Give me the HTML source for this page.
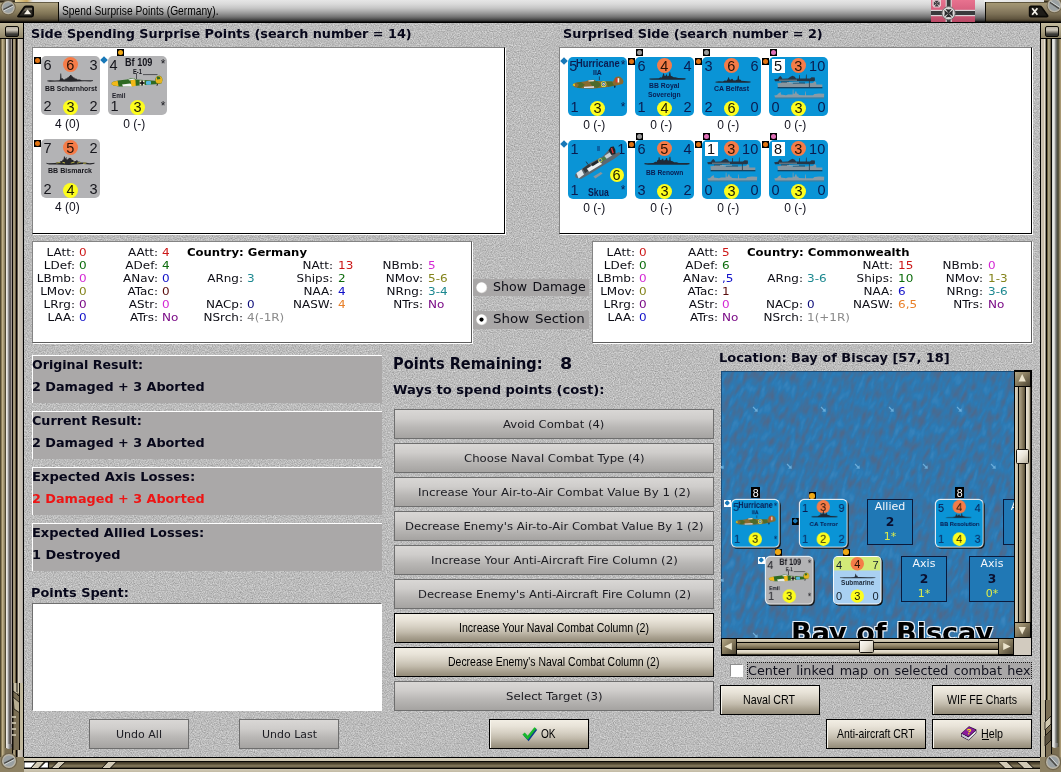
<!DOCTYPE html><html><head><meta charset="utf-8"><title>Spend Surprise Points (Germany).</title>
<style>
html,body{margin:0;padding:0;}
body{width:1061px;height:772px;overflow:hidden;position:relative;background:#bababa;font-family:"DejaVu Sans","Verdana",sans-serif;}
.t{position:absolute;white-space:pre;display:block;}
.abs{position:absolute;}
.sunk{position:absolute;background:#fff;border-top:1px solid #848484;border-left:1px solid #848484;border-right:1px solid #000;border-bottom:1px solid #000;box-sizing:border-box;box-shadow:1px 1px 0 #fff;}
.res{position:absolute;background:#aaa8a8;border-top:1px solid #fff;border-left:1px solid #fff;box-sizing:border-box;}
.bd{position:absolute;box-sizing:border-box;border:1px solid #6e6e6e;background:linear-gradient(#d9d7d5 0%,#cfcdcb 30%,#bab8b6 60%,#a5a3a1 100%);}
.ba{position:absolute;box-sizing:border-box;border:1px solid #000;background:linear-gradient(#f2eee4 0%,#e8e3d8 22%,#d6d0c3 45%,#c2bbac 65%,#aaa291 82%,#938b79 100%);box-shadow:inset 1px 0 0 #f8f6ee;}
.cn{position:absolute;width:59px;height:59px;border-radius:5px;}
.cn .t{font-family:"Liberation Sans","Arial",sans-serif;}
.mk{position:absolute;width:7px;height:7px;}
.mk i{position:absolute;left:0.7px;top:0.7px;width:5.6px;height:5.6px;border-radius:50%;display:block;}
#root{position:absolute;left:0;top:0;width:1061px;height:772px;overflow:hidden;will-change:transform;}
</style></head><body><div id="root">
<svg class="abs" style="left:24px;top:22px" width="1016" height="735"><defs>
<filter id="nz" x="0" y="0" width="100%" height="100%" color-interpolation-filters="sRGB"><feTurbulence type="fractalNoise" baseFrequency="0.85" numOctaves="2" seed="7" result="n"/>
<feColorMatrix type="matrix" values="0.37 0 0 0 0.55  0.37 0 0 0 0.55  0.37 0 0 0 0.55  0 0 0 0 1"/></filter></defs>
<rect width="1016" height="735" filter="url(#nz)"/></svg>
<div class="abs" style="left:0;top:0;width:1061px;height:23px;background:linear-gradient(#e6e6e6 0px,#dadada 4px,#c6c6c6 8px,#aeaeae 11px,#929292 14px,#727272 17px,#545454 19px,#2e2e2e 21px,#000 22px,#000 23px)"></div><div class="abs" style="left:0;top:0;width:59px;height:23px;background:linear-gradient(#6a5f48 0px,#1a1408 2px,#b0a482 3px,#9a8d6b 8px,#7f7355 14px,#5f553f 19px,#332c1e 21px,#000 22px);border-right:1px solid #0c0a04;box-sizing:border-box"></div><div class="abs" style="left:15px;top:0;width:44px;height:2px;background:linear-gradient(90deg,#e8d9a8,#caa860 12px,#e6e6e6 18px,#f2f2f2)"></div><svg class="abs" style="left:0;top:0" width="18" height="18"><circle cx="8.2" cy="7.6" r="7.6" fill="#6f644c"/><circle cx="8.2" cy="7.6" r="6.6" fill="#b9b4a6"/><circle cx="8.2" cy="7.6" r="5.3" fill="#9aa0a2"/><path d="M3.4 9.6 L12.6 5" stroke="#4a4a48" stroke-width="1.6"/><path d="M3.8 10.8 L13 6.2" stroke="#d8dcdc" stroke-width="0.9"/></svg><svg class="abs" style="left:16px;top:5px" width="20" height="14"><path d="M2 11.2 L8.2 2.2 Q9 1.2 10.4 1.2 L15.6 1.2 Q17.2 1.2 17.2 2.8 L17.2 10 Q17.2 11.6 15.6 11.6 L3 11.6 Q1.4 11.6 2 11.2Z" fill="#2b2822" stroke="#0a0906" stroke-width="1.6"/><path d="M5.4 8.4 L9.4 3 L16 3 L16 5 L8 6Z" fill="#8d8674" opacity=".75"/><path d="M8 9.2 L11.6 4.6 L15.2 9.2Z" fill="#f6f2e6"/></svg><span class="t" style="left:62.30px;top:5.10px;font:normal 12.4px/12.4px 'Liberation Sans','Arial',sans-serif;color:#000;transform:scaleX(0.8263);transform-origin:0 0;">Spend Surprise Points (Germany).</span><svg class="abs" style="left:931px;top:0" width="44" height="22" viewBox="0 0 44 22">
<defs><linearGradient id="fg" x1="0" y1="0" x2="0" y2="1"><stop offset="0" stop-color="#e8728f"/><stop offset=".5" stop-color="#d65f7e"/><stop offset="1" stop-color="#b84864"/></linearGradient></defs>
<rect width="44" height="22" fill="url(#fg)"/>
<rect x="0" y="9.8" width="44" height="6.4" fill="#d9d3d5"/><rect x="14.6" y="0" width="6.2" height="22" fill="#d9d3d5"/>
<rect x="0" y="11" width="44" height="4" fill="#3a3a3c"/><rect x="15.8" y="0" width="3.8" height="22" fill="#3a3a3c"/>
<circle cx="17.6" cy="13.2" r="6.6" fill="#dedada" stroke="#6a6668" stroke-width="0.9"/>
<path d="M17.6 13.2 L14.4 8.8 Q17.6 10 20.8 8.8Z M17.6 13.2 L14.4 17.6 Q17.6 16.4 20.8 17.6Z M17.6 13.2 L13.2 10 Q14.4 13.2 13.2 16.4Z M17.6 13.2 L22 10 Q20.8 13.2 22 16.4Z" fill="#2a2a2c"/>
<path d="M1.4 0 H10 V5.6 L8.6 7.4 H2.8 L1.4 5.6Z" fill="#e6ced4"/>
<path d="M5.7 3.6 L3.6 0.8 H7.8Z M5.7 3.6 L3.6 6.4 H7.8Z M5.7 3.6 L2.8 1.6 V5.6Z M5.7 3.6 L8.6 1.6 V5.6Z" fill="#3c3c40"/>
</svg><div class="abs" style="left:985px;top:0;width:76px;height:23px;background:linear-gradient(#8c8064 0px,#1a1408 2px,#a59874 3px,#94876a 8px,#7c7056 14px,#5f543e 19px,#3a3222 21px,#000 22px);border-left:1px solid #0c0a04;box-sizing:border-box"></div><div class="abs" style="left:984px;top:0;width:60px;height:2px;background:linear-gradient(90deg,#f0f0f0,#dcdcdc)"></div><svg class="abs" style="left:1028px;top:5px" width="22" height="14"><path d="M3 1.4 L11.6 1.4 Q13 1.4 13.8 2.4 L19.6 10.6 Q20 11.6 18.6 11.6 L3 11.6 Q1.6 11.6 1.6 10 L1.6 2.8 Q1.6 1.4 3 1.4Z" fill="#1e1c18" stroke="#0a0906" stroke-width="1.6"/><path d="M4.2 3.2 L9.4 9.8 M9.4 3.2 L4.2 9.8" stroke="#f6f4ec" stroke-width="1.7"/></svg><svg class="abs" style="left:1045px;top:0" width="16" height="18"><circle cx="9.4" cy="5.4" r="7.8" fill="#6f644c"/><circle cx="9.4" cy="5.4" r="6.8" fill="#b9b4a6"/><circle cx="9.4" cy="5.4" r="5.5" fill="#9aa0a2"/><path d="M5 2.4 L14.2 8.6" stroke="#4a4a48" stroke-width="1.6"/><path d="M5.6 1.4 L14.8 7.4" stroke="#d8dcdc" stroke-width="0.9"/></svg><div class="abs" style="left:0;top:23px;width:24px;height:734px;background:linear-gradient(90deg,#504830 0px,#504830 1px,#8a7c58 1px,#8a7c58 2px,#beb08a 2px,#beb08a 3px,#a89a76 3px,#a89a76 4px,#8c8060 4px,#8c8060 5px,#4e4832 5px,#4e4832 6px,#eeeae4 6px,#eeeae4 7px,#d0d0d0 7px,#d0d0d0 8px,#909090 8px,#909090 9px,#686462 9px,#686462 10px,#5c5654 10px,#5c5654 11px,#a09894 11px,#a09894 12px,#0a0604 12px,#0a0604 13px,#a09474 13px,#a09474 14px,#a89c7e 14px,#a89c7e 15px,#6a5c40 15px,#6a5c40 16px,#080402 16px,#080402 17px,#60584c 17px,#60584c 18px,#d8d0c0 18px,#d8d0c0 19px,#cac2b2 19px,#cac2b2 20px,#c6beb0 20px,#c6beb0 21px,#c4bcb0 21px,#c4bcb0 22px,#b0a8a0 22px,#b0a8a0 23px,#000000 23px,#000000 24px)"></div><div class="abs" style="left:0;top:23px;width:24px;height:16px;background:linear-gradient(#c4bb9e,#aaa082 8px,#8f8466);border-right:1px solid #000;border-bottom:1px solid #000;box-sizing:border-box"></div><div class="abs" style="left:5px;top:26px;width:14px;height:11px;border:1px solid #0c0a06;border-radius:2px;box-sizing:border-box;background:linear-gradient(#b9b2a4 0,#cdc7ba 3px,#8a857a 5px,#3b3a36 7px,#2a2a28 11px)"></div><svg class="abs" style="left:0;top:683px" width="24" height="67"><rect x="13" y="0" width="10" height="67" fill="#7b6f55"/><path d="M13 0 V8 L17 12 V0Z" fill="#c9c0a6"/><path d="M17 0 H23 V14 L17 9Z" fill="#cfc7ae"/><path d="M13 8 L23 16 M13 0 V67 M17 0 V9" stroke="#14100a" stroke-width="1" fill="none"/><path d="M13 14 L20 20 V30 L14 26Z" fill="#b8ae92" stroke="#14100a" stroke-width=".8"/><path d="M12 34 h4 M12 40 h4 M12 46 h4 M12 52 h4" stroke="#d9d2bc" stroke-width="1.6"/><rect x="20" y="0" width="3" height="67" fill="#bfb69a"/><path d="M19.5 0 V67" stroke="#14100a" stroke-width="1"/></svg><div class="abs" style="left:1040px;top:23px;width:21px;height:734px;background:linear-gradient(90deg,#000000 0px,#000000 1px,#c8c0b0 1px,#c8c0b0 2px,#c8c0ae 2px,#c8c0ae 3px,#c8bca8 3px,#c8bca8 4px,#e8e0d4 4px,#e8e0d4 5px,#8a8878 5px,#8a8878 6px,#050402 6px,#050402 7px,#6a6040 7px,#6a6040 8px,#a8a080 8px,#a8a080 9px,#a09878 9px,#a09878 10px,#6a6048 10px,#6a6048 11px,#050402 11px,#050402 12px,#d8d8d4 12px,#d8d8d4 13px,#e6e6e2 13px,#e6e6e2 14px,#d0d0cc 14px,#d0d0cc 15px,#909090 15px,#909090 16px,#686864 16px,#686864 17px,#505040 17px,#505040 18px,#5a543e 18px,#5a543e 19px,#8a7e60 19px,#8a7e60 20px,#a89874 20px,#a89874 21px)"></div><div class="abs" style="left:1040px;top:23px;width:21px;height:16px;background:linear-gradient(#c4bb9e,#aaa082 8px,#8f8466);border-left:1px solid #000;border-bottom:1px solid #000;box-sizing:border-box"></div><div class="abs" style="left:1045px;top:26px;width:14px;height:11px;border:1px solid #0c0a06;border-radius:2px;box-sizing:border-box;background:linear-gradient(#b9b2a4 0,#cdc7ba 3px,#8a857a 5px,#3b3a36 7px,#2a2a28 11px)"></div><svg class="abs" style="left:1040px;top:700px" width="21" height="57"><rect x="1" y="0" width="10" height="57" fill="#7b6f55"/><rect x="1" y="0" width="4" height="57" fill="#c3baa0"/><path d="M5.5 0 V57" stroke="#14100a" stroke-width="1"/><path d="M5 22 L11 16 V24 L5 30Z" fill="#cfc7ae" stroke="#14100a" stroke-width=".8"/><path d="M5 36 L11 30 V40 L5 46Z" fill="#5b523e" stroke="#14100a" stroke-width=".8"/></svg><div class="abs" style="left:5px;top:748px;width:7px;height:9px;background:#7a6e52"></div><div class="abs" style="left:6px;top:744px;width:6px;height:5px;border-radius:0 0 3px 3px;background:linear-gradient(90deg,#eeeae4,#d0d0d0 30%,#8a8a8a 60%,#5c5654)"></div><div class="abs" style="left:1052px;top:747px;width:7px;height:10px;background:#7a6e52"></div><div class="abs" style="left:1052px;top:743px;width:6px;height:5px;border-radius:0 0 3px 3px;background:linear-gradient(90deg,#d8d8d4,#e6e6e2 30%,#909090 65%,#686864)"></div><div class="abs" style="left:0;top:757px;width:1061px;height:15px;background:linear-gradient(#000 0,#000 1px,#d6cfbb 1px,#cdc5b0 4px,#0a0804 4px,#0a0804 5px,#3c3424 5px,#5a5038 7px,#8a7e60 9px,#6a6048 10px,#3a3222 11px,#0a0804 11px,#0a0804 12px,#d2cab6 12px,#c2baa4 15px)"></div><svg class="abs" style="left:0;top:762px" width="1061" height="6" viewBox="0 0 1061 6">
<g stroke="#0a0804" stroke-width=".9">
<path d="M24 0 H36.4 L31 6 H24Z" fill="#fff"/><path d="M36.4 0 H44 L38.5 6 H31Z" fill="#d2cab6" stroke="none"/><path d="M45.5 0 H48.4 V6 H39.5Z" fill="#fff"/>
<path d="M58 0 H65 L58.5 6 H52Z" fill="#d2cab6" stroke="none"/><path d="M57.6 0 L51.6 6 M65.4 0 L59 6 M36.4 0 L31 6 M44.4 0 L38.8 6" fill="none"/>
<path d="M108 0 H116 L110 6 H102.5Z" fill="#d2cab6" stroke="none"/><path d="M107.6 0 L102 6 M116.4 0 L110.6 6" fill="none"/>
<path d="M998.6 0 H1007 L1013 6 H1005Z" fill="#d2cab6" stroke="none"/><path d="M998.2 0 L1004.6 6 M1007.4 0 L1013.4 6" fill="none"/>
<path d="M1017.5 0 H1027 L1033 6 H1024Z" fill="#d2cab6" stroke="none"/><path d="M1017.1 0 L1023.6 6 M1027.4 0 L1033.4 6" fill="none"/>
<path d="M48.6 0 V6" fill="none"/>
</g></svg><svg class="abs" style="left:0;top:750px" width="24" height="22"><rect x="0" y="7" width="24" height="15" fill="#8d8163"/><circle cx="9" cy="11" r="8.2" fill="#6f644c"/><circle cx="9" cy="11" r="7" fill="#b9b4a6"/><circle cx="9" cy="11" r="5.6" fill="#9aa0a2"/><path d="M4.2 13.4 L13.8 8.4" stroke="#4a4a48" stroke-width="1.6"/><path d="M4.6 14.6 L14.2 9.6" stroke="#d8dcdc" stroke-width="0.9"/></svg><svg class="abs" style="left:1040px;top:748px" width="21" height="24"><rect x="0" y="9" width="21" height="15" fill="#8d8163"/><circle cx="13" cy="14" r="8.2" fill="#6f644c"/><circle cx="13" cy="14" r="7" fill="#b9b4a6"/><circle cx="13" cy="14" r="5.6" fill="#9aa0a2"/><path d="M9 9.6 L16.6 18" stroke="#4a4a48" stroke-width="1.6"/><path d="M10.2 8.8 L17.8 17.2" stroke="#d8dcdc" stroke-width="0.9"/></svg><div class="sunk" style="left:32px;top:47px;width:473px;height:187px"></div><div class="sunk" style="left:559px;top:47px;width:473px;height:187px"></div><div class="sunk" style="left:32px;top:241px;width:440px;height:102px;border-right-color:#5c5c5c;border-bottom-color:#5c5c5c"></div><div class="sunk" style="left:592px;top:241px;width:440px;height:102px;border-right-color:#5c5c5c;border-bottom-color:#5c5c5c"></div><span class="t" style="left:31.30px;top:27.59px;font:bold 12.3px/12.3px 'DejaVu Sans','Verdana',sans-serif;color:#07071a;transform:scaleX(1.0407);transform-origin:0 0;">Side Spending Surprise Points (search number = 14)</span><span class="t" style="left:562.80px;top:27.59px;font:bold 12.3px/12.3px 'DejaVu Sans','Verdana',sans-serif;color:#07071a;transform:scaleX(1.0449);transform-origin:0 0;">Surprised Side (search number = 2)</span><div class="mk" style="left:34px;top:57px;background:#000"><i style="background:#e27412"></i></div><div class="cn" style="left:41px;top:56px;background:#b3b3b5;"><span class="t" style="left:2.60px;top:2.43px;font:normal 14.5px/14.5px 'Liberation Sans','Arial',sans-serif;color:#16161c;">6</span><div class="abs" style="left:21.9px;top:0.8000000000000007px;width:15.0px;height:15.0px;border-radius:50%;background:#f57c48"></div><span class="t" style="left:-120.60px;width:300px;text-align:center;top:1.93px;font:normal 14.5px/14.5px 'Liberation Sans','Arial',sans-serif;color:#2a1206;">6</span><span class="t" style="left:-243.40px;width:300px;text-align:right;top:2.43px;font:normal 14.5px/14.5px 'Liberation Sans','Arial',sans-serif;color:#16161c;">3</span><span class="t" style="left:2.60px;top:43.43px;font:normal 14.5px/14.5px 'Liberation Sans','Arial',sans-serif;color:#16161c;">2</span><div class="abs" style="left:22.0px;top:43.8px;width:15.0px;height:15.0px;border-radius:50%;background:#fdfd1e"></div><span class="t" style="left:-120.50px;width:300px;text-align:center;top:43.83px;font:normal 14.5px/14.5px 'Liberation Sans','Arial',sans-serif;color:#1c1c04;">3</span><span class="t" style="left:-243.40px;width:300px;text-align:right;top:43.43px;font:normal 14.5px/14.5px 'Liberation Sans','Arial',sans-serif;color:#16161c;">2</span><svg class="abs" style="left:5.8px;top:16.6px" width="46.6" height="9.4" viewBox="0 0 47 10" preserveAspectRatio="none"><g fill="#26262a"><path d="M0.3 7.9 L3 7.7 L8 8 L12.4 7.6 L13.2 6.6 L13.5 0.4 L14.3 0.4 L14.6 5.8 L15.6 5.4 L16.2 6.6 L18.2 6.8 L19 5.6 L20.2 5.8 L20.8 4.4 L21.8 4.6 L22.2 3.4 L23 3.2 L23.4 2 L24.6 2 L25 3.4 L26 3.6 L26.4 4.8 L27.4 4.6 L28 5.8 L29.6 5.8 L30.4 6.8 L33 7 L35 7.6 L41 7.8 L46.8 7.7 L46.8 8.5 L44 9 L38 8.8 L24 9.4 L10 9 L3 9.2 L0.3 8.7Z"/></g></svg><span class="t" style="left:4.20px;top:28.84px;font:bold 7.4px/7.4px 'Liberation Sans','Arial',sans-serif;color:#16161c;transform:scaleX(0.9242);transform-origin:0 0">BB Scharnhorst</span></div><span class="t" style="left:-82.70px;width:300px;text-align:center;top:117.64px;font:normal 12px/12px 'Liberation Sans','Arial',sans-serif;color:#10101c;">4 (0)</span><svg class="abs" style="left:100.4px;top:56.4px" width="8" height="8"><path d="M4 0.2 L7.8 4 L4 7.8 L0.2 4Z" fill="#1878b8"/></svg><div class="mk" style="left:117px;top:49px;background:#000"><i style="background:#f0a814"></i></div><div class="cn" style="left:108px;top:56px;background:#b3b3b5;"><span class="t" style="left:-242.60px;width:300px;text-align:right;top:2.44px;font:normal 12px/12px 'Liberation Sans','Arial',sans-serif;color:#16161c;">*</span><span class="t" style="left:2.60px;top:43.43px;font:normal 14.5px/14.5px 'Liberation Sans','Arial',sans-serif;color:#16161c;">1</span><div class="abs" style="left:22.0px;top:43.8px;width:15.0px;height:15.0px;border-radius:50%;background:#fdfd1e"></div><span class="t" style="left:-120.50px;width:300px;text-align:center;top:43.83px;font:normal 14.5px/14.5px 'Liberation Sans','Arial',sans-serif;color:#1c1c04;">3</span><span class="t" style="left:-242.60px;width:300px;text-align:right;top:44.24px;font:normal 12px/12px 'Liberation Sans','Arial',sans-serif;color:#16161c;">*</span><span class="t" style="left:1.40px;top:2.33px;font:normal 14.5px/14.5px 'Liberation Sans','Arial',sans-serif;color:#16161c;">4</span><span class="t" style="left:16.90px;top:1.87px;font:bold 10.2px/10.2px 'Liberation Sans','Arial',sans-serif;color:#14141c;transform:scaleX(0.8961);transform-origin:0 0">Bf 109</span><span class="t" style="left:25.30px;top:11.67px;font:bold 7px/7px 'Liberation Sans','Arial',sans-serif;color:#14141c;transform:scaleX(0.8252);transform-origin:0 0">E-1</span><svg class="abs" style="left:27.5px;top:17px" width="24" height="8"><path d="M0.5 0.6 V6 M7 1.6 H21.5" stroke="#33333a" stroke-width=".8" fill="none"/></svg><svg class="abs" style="left:3.4px;top:19px" width="52" height="12.4" viewBox="0 0 52 12.4"><g>
<path d="M0.6 9.2 Q0.2 7.6 2.2 6.8 L7 5.6 L16 4.6 L19 3.4 L23 3.2 L25 4.4 L40 5.4 L44 5.8 L45 2.2 Q46.6 0.2 49 0.8 Q51.6 2 51.4 5.4 L50.6 8.2 L48 9 L40 9.4 L28 10.6 L18 11.6 L8 11.4 L2.4 10.6Z" fill="#2e6a22"/>
<path d="M0.6 9.2 Q0.2 7.6 2.2 6.8 L6.6 5.8 L7.6 11.2 L2.4 10.6Z" fill="#f2b818"/>
<path d="M11 9.4 L19 8.6 L22 10 L21 11.4 L12 11.6Z" fill="#f4f4f4"/>
<path d="M17 4.4 L22.6 3.4 L24.6 4.6 L18.6 5.4Z" fill="#e8ece8"/>
<path d="M19.4 5.2 L24.4 4.8 L24.8 11 L20.6 11.4Z" fill="#f2b818"/>
<rect x="28.6" y="5.4" width="5" height="5" fill="#f0e8d0"/><path d="M31.1 5.4 V10.4 M28.6 7.9 H33.6" stroke="#0a0a0a" stroke-width="1.5"/>
<rect x="35" y="6" width="5" height="3.8" rx="1" fill="#58b8e0"/>
<path d="M44.4 5.8 L45.2 2.4 Q46.6 0.4 49 0.9 Q51.6 2 51.4 5.4 L50.6 8.2 L46 8.8Z" fill="#e8b41c"/>
<path d="M46 1.6 L48.6 1.4 L49.4 4 L46 4.6Z" fill="#2e6a22"/>
<path d="M46.6 8.6 l-0.6 2.2" stroke="#222" stroke-width="1"/>
</g></svg><span class="t" style="left:3.50px;top:35.64px;font:bold 7.4px/7.4px 'Liberation Sans','Arial',sans-serif;color:#20202a;transform:scaleX(0.8585);transform-origin:0 0">Emil</span></div><span class="t" style="left:-15.70px;width:300px;text-align:center;top:117.64px;font:normal 12px/12px 'Liberation Sans','Arial',sans-serif;color:#10101c;">0 (-)</span><div class="mk" style="left:34px;top:140px;background:#000"><i style="background:#e27412"></i></div><div class="cn" style="left:41px;top:139px;background:#b3b3b5;"><span class="t" style="left:2.60px;top:2.43px;font:normal 14.5px/14.5px 'Liberation Sans','Arial',sans-serif;color:#16161c;">7</span><div class="abs" style="left:21.9px;top:0.8000000000000007px;width:15.0px;height:15.0px;border-radius:50%;background:#f57c48"></div><span class="t" style="left:-120.60px;width:300px;text-align:center;top:1.93px;font:normal 14.5px/14.5px 'Liberation Sans','Arial',sans-serif;color:#2a1206;">5</span><span class="t" style="left:-243.40px;width:300px;text-align:right;top:2.43px;font:normal 14.5px/14.5px 'Liberation Sans','Arial',sans-serif;color:#16161c;">2</span><span class="t" style="left:2.60px;top:43.43px;font:normal 14.5px/14.5px 'Liberation Sans','Arial',sans-serif;color:#16161c;">2</span><div class="abs" style="left:22.0px;top:43.8px;width:15.0px;height:15.0px;border-radius:50%;background:#fdfd1e"></div><span class="t" style="left:-120.50px;width:300px;text-align:center;top:43.83px;font:normal 14.5px/14.5px 'Liberation Sans','Arial',sans-serif;color:#1c1c04;">4</span><span class="t" style="left:-243.40px;width:300px;text-align:right;top:43.43px;font:normal 14.5px/14.5px 'Liberation Sans','Arial',sans-serif;color:#16161c;">3</span><svg class="abs" style="left:5px;top:17.2px" width="49" height="9.4" viewBox="0 0 47.5 10" preserveAspectRatio="none"><g fill="#26262a"><path d="M0.3 7.2 L2 7.8 L9 7.4 L11 6.6 L13 6.6 L14 5.6 L15.6 5.4 L16 4 L17 3.8 L17.4 0.6 L18.2 0.6 L18.6 3 L19.4 1.2 L20 1.4 L19.8 3.4 L21 3.6 L22 2.4 L23.2 1.8 L24.4 2.4 L25 4 L26.4 4.2 L27 5.6 L29 5.4 L29.6 4.4 L30.4 4.4 L30.8 5.8 L33 6 L34 6.8 L38 7 L42 7.6 L47.2 7.2 L46.8 8.2 L43 9 L36 8.6 L22 9.6 L10 9 L3 9 L0.6 8.2Z"/><path d="M10 7.6 L14 6.8 M16 6.6 L18.4 7.4 M24 7.6 L27.6 6.4 M30 7.6 L33.6 6.8 M36 7.8 L39 7.4" stroke="#b8b04a" stroke-width="1" fill="none"/></g></svg><span class="t" style="left:7.40px;top:28.34px;font:bold 7.4px/7.4px 'Liberation Sans','Arial',sans-serif;color:#16161c;transform:scaleX(0.9562);transform-origin:0 0">BB Bismarck</span></div><span class="t" style="left:-82.70px;width:300px;text-align:center;top:200.64px;font:normal 12px/12px 'Liberation Sans','Arial',sans-serif;color:#10101c;">4 (0)</span><svg class="abs" style="left:559.6px;top:56.9px" width="8" height="8"><path d="M4 0.2 L7.8 4 L4 7.8 L0.2 4Z" fill="#1878b8"/></svg><div class="cn" style="left:568px;top:57px;background:#0a94d6;"><span class="t" style="left:-242.60px;width:300px;text-align:right;top:2.44px;font:normal 12px/12px 'Liberation Sans','Arial',sans-serif;color:#0a1c50;">*</span><span class="t" style="left:2.60px;top:43.43px;font:normal 14.5px/14.5px 'Liberation Sans','Arial',sans-serif;color:#0a1c50;">1</span><div class="abs" style="left:22.0px;top:43.8px;width:15.0px;height:15.0px;border-radius:50%;background:#fdfd1e"></div><span class="t" style="left:-120.50px;width:300px;text-align:center;top:43.83px;font:normal 14.5px/14.5px 'Liberation Sans','Arial',sans-serif;color:#1c1c04;">3</span><span class="t" style="left:-242.60px;width:300px;text-align:right;top:44.24px;font:normal 12px/12px 'Liberation Sans','Arial',sans-serif;color:#0a1c50;">*</span><span class="t" style="left:1.20px;top:1.63px;font:normal 14.5px/14.5px 'Liberation Sans','Arial',sans-serif;color:#0a1c50;">5</span><span class="t" style="left:8.00px;top:0.83px;font:bold 10.6px/10.6px 'Liberation Sans','Arial',sans-serif;color:#0a1c50;transform:scaleX(0.8814);transform-origin:0 0">Hurricane</span><span class="t" style="left:25.20px;top:11.71px;font:bold 7.2px/7.2px 'Liberation Sans','Arial',sans-serif;color:#0a1c50;transform:scaleX(0.9578);transform-origin:0 0">IIA</span><svg class="abs" style="left:4.2px;top:18.6px" width="52" height="13.4" viewBox="0 0 52 12.4" preserveAspectRatio="none"><g>
<path d="M0.6 8.6 Q0.8 7 3.4 6.2 L14 4.8 L17 3.6 L22 3.4 L24 4.6 L36 5 L41 5.2 L43 1.6 Q45 -0.2 48 0.6 Q51 2 51.6 5 L50.6 7.4 L43 9 L34 10.4 L20 11.8 L8 11.4 L2.6 10.4Z" fill="#8a6a30"/>
<path d="M4 6.2 L9 5.6 L13 8 L9 11.2 L5 10.8 L7 8.2Z M17 5 L25 4.6 L30 8.4 L25 11 L20 9 Z M34 5.2 L40 5.2 L42 8.8 L36 10Z" fill="#4e6a2a"/>
<path d="M0.6 8.6 Q0.8 7.4 2.4 6.6 L3.2 9.6Z" fill="#e8d020"/>
<path d="M16.4 4.2 L21.8 3.6 L21.8 4.8 L16.6 5.2Z" fill="#f0f0f0"/>
<path d="M12 10 L22 9.6 L22 10.8 L12 11Z" fill="#e8e8f4"/>
<circle cx="31.6" cy="7.6" r="2.7" fill="#e8e040"/><circle cx="31.6" cy="7.6" r="2" fill="#2a6a8a"/><circle cx="31.6" cy="7.6" r="1.1" fill="#f0f0f0"/><circle cx="31.6" cy="7.6" r=".5" fill="#b02020"/>
<rect x="43.6" y="2" width="2" height="4" fill="#e03028"/><rect x="45.6" y="2" width="1.6" height="4" fill="#f4f4f4"/>
<path d="M27.4 0.4 V3.8" stroke="#223" stroke-width=".7"/>
<path d="M43 9 l-0.4 1.8" stroke="#112" stroke-width="1.2"/>
</g></svg></div><span class="t" style="left:444.30px;width:300px;text-align:center;top:118.64px;font:normal 12px/12px 'Liberation Sans','Arial',sans-serif;color:#10101c;">0 (-)</span><div class="mk" style="left:628px;top:58px;background:#000"><i style="background:#e27412"></i></div><div class="mk" style="left:636px;top:49px;background:#000"><i style="background:#9a9a9a"></i></div><div class="cn" style="left:635px;top:57px;background:#0a94d6;"><span class="t" style="left:2.60px;top:2.43px;font:normal 14.5px/14.5px 'Liberation Sans','Arial',sans-serif;color:#0a1c50;">6</span><div class="abs" style="left:21.9px;top:0.8000000000000007px;width:15.0px;height:15.0px;border-radius:50%;background:#f57c48"></div><span class="t" style="left:-120.60px;width:300px;text-align:center;top:1.93px;font:normal 14.5px/14.5px 'Liberation Sans','Arial',sans-serif;color:#2a1206;">4</span><span class="t" style="left:-243.40px;width:300px;text-align:right;top:2.43px;font:normal 14.5px/14.5px 'Liberation Sans','Arial',sans-serif;color:#0a1c50;">4</span><span class="t" style="left:2.60px;top:43.43px;font:normal 14.5px/14.5px 'Liberation Sans','Arial',sans-serif;color:#0a1c50;">1</span><div class="abs" style="left:22.0px;top:43.8px;width:15.0px;height:15.0px;border-radius:50%;background:#fdfd1e"></div><span class="t" style="left:-120.50px;width:300px;text-align:center;top:43.83px;font:normal 14.5px/14.5px 'Liberation Sans','Arial',sans-serif;color:#1c1c04;">4</span><span class="t" style="left:-243.40px;width:300px;text-align:right;top:43.43px;font:normal 14.5px/14.5px 'Liberation Sans','Arial',sans-serif;color:#0a1c50;">2</span><svg class="abs" style="left:14px;top:13.6px" width="37" height="9.6" viewBox="0 0 38 10" preserveAspectRatio="none"><g fill="#1e2a38"><path d="M0.5 7.8 L10 7.6 L12 6.6 L13.2 6.8 L14 5 L14.6 2.6 L15.4 2.6 L15.8 5 L17 5.2 L17.6 3.6 L18.4 3.6 L18.8 5.4 L20.4 5 L21 1.2 L21.8 1.2 L22.4 5 L23.6 5.6 L25.4 6.4 L27 6.6 L30 7.4 L37.5 7.6 L37.5 8.8 L35 9.2 L3 9.2 L0.5 8.8Z"/></g></svg><span class="t" style="left:14.00px;top:25.14px;font:bold 7.4px/7.4px 'Liberation Sans','Arial',sans-serif;color:#0a1c50;transform:scaleX(0.9252);transform-origin:0 0">BB Royal</span><span class="t" style="left:13.10px;top:34.14px;font:bold 7.4px/7.4px 'Liberation Sans','Arial',sans-serif;color:#0a1c50;transform:scaleX(0.9123);transform-origin:0 0">Sovereign</span></div><span class="t" style="left:511.30px;width:300px;text-align:center;top:118.64px;font:normal 12px/12px 'Liberation Sans','Arial',sans-serif;color:#10101c;">0 (-)</span><div class="mk" style="left:695px;top:58px;background:#000"><i style="background:#e27412"></i></div><div class="mk" style="left:703px;top:49px;background:#000"><i style="background:#9a9a9a"></i></div><div class="cn" style="left:702px;top:57px;background:#0a94d6;"><span class="t" style="left:2.60px;top:2.43px;font:normal 14.5px/14.5px 'Liberation Sans','Arial',sans-serif;color:#0a1c50;">3</span><div class="abs" style="left:21.9px;top:0.8000000000000007px;width:15.0px;height:15.0px;border-radius:50%;background:#f57c48"></div><span class="t" style="left:-120.60px;width:300px;text-align:center;top:1.93px;font:normal 14.5px/14.5px 'Liberation Sans','Arial',sans-serif;color:#2a1206;">6</span><span class="t" style="left:-243.40px;width:300px;text-align:right;top:2.43px;font:normal 14.5px/14.5px 'Liberation Sans','Arial',sans-serif;color:#0a1c50;">6</span><span class="t" style="left:2.60px;top:43.43px;font:normal 14.5px/14.5px 'Liberation Sans','Arial',sans-serif;color:#0a1c50;">2</span><div class="abs" style="left:22.0px;top:43.8px;width:15.0px;height:15.0px;border-radius:50%;background:#fdfd1e"></div><span class="t" style="left:-120.50px;width:300px;text-align:center;top:43.83px;font:normal 14.5px/14.5px 'Liberation Sans','Arial',sans-serif;color:#1c1c04;">6</span><span class="t" style="left:-243.40px;width:300px;text-align:right;top:43.43px;font:normal 14.5px/14.5px 'Liberation Sans','Arial',sans-serif;color:#0a1c50;">0</span><svg class="abs" style="left:13.2px;top:17.6px" width="36" height="8.6" viewBox="0 0 37 10" preserveAspectRatio="none"><g fill="#1e2a38"><path d="M0.5 7.8 L4 7.4 L8 7.6 L10 6.4 L12 6.6 L13 5 L13.8 2.6 L14.4 2.6 L14.8 5 L16 5.6 L17.4 4.4 L18.2 4.6 L18.6 6.2 L21 6.4 L22 5.4 L23 5.6 L23.6 0.8 L24.4 0.8 L24.8 5.2 L26.4 5.6 L27 6.6 L30 7 L36.5 7.6 L36.5 8.6 L34 9 L3 9 L0.5 8.6Z"/></g></svg><span class="t" style="left:12.10px;top:28.14px;font:bold 7.4px/7.4px 'Liberation Sans','Arial',sans-serif;color:#0a1c50;transform:scaleX(0.9432);transform-origin:0 0">CA Belfast</span></div><span class="t" style="left:578.30px;width:300px;text-align:center;top:118.64px;font:normal 12px/12px 'Liberation Sans','Arial',sans-serif;color:#10101c;">0 (-)</span><div class="mk" style="left:762px;top:58px;background:#000"><i style="background:#e27412"></i></div><div class="mk" style="left:770px;top:49px;background:#000"><i style="background:#e070b8"></i></div><div class="cn" style="left:769px;top:57px;background:#0a94d6;"><div class="abs" style="left:2.8px;top:1.8px;width:13.2px;height:14px;background:#fff"></div><span class="t" style="left:5.00px;top:2.43px;font:normal 14.5px/14.5px 'Liberation Sans','Arial',sans-serif;color:#101014;">5</span><div class="abs" style="left:21.8px;top:0.9000000000000004px;width:15.0px;height:15.0px;border-radius:50%;background:#f57c48"></div><span class="t" style="left:-120.70px;width:300px;text-align:center;top:1.93px;font:normal 14.5px/14.5px 'Liberation Sans','Arial',sans-serif;color:#2a1206;">3</span><span class="t" style="left:-243.80px;width:300px;text-align:right;top:2.43px;font:normal 14.5px/14.5px 'Liberation Sans','Arial',sans-serif;color:#0a1c50;">10</span><span class="t" style="left:2.60px;top:43.43px;font:normal 14.5px/14.5px 'Liberation Sans','Arial',sans-serif;color:#0a1c50;">0</span><div class="abs" style="left:22.0px;top:43.8px;width:15.0px;height:15.0px;border-radius:50%;background:#fdfd1e"></div><span class="t" style="left:-120.50px;width:300px;text-align:center;top:43.83px;font:normal 14.5px/14.5px 'Liberation Sans','Arial',sans-serif;color:#1c1c04;">3</span><span class="t" style="left:-243.40px;width:300px;text-align:right;top:43.43px;font:normal 14.5px/14.5px 'Liberation Sans','Arial',sans-serif;color:#0a1c50;">0</span><svg class="abs" style="left:0;top:0" width="59" height="59" viewBox="0 0 59 59">
<g fill="#8796a0"><path d="M8.4 26.2 L12 26 L13 25 L20 25.2 L24 26.4 L30 26.2 L36 26.4 L44 26 L45.4 24.6 L47 24.8 L47.4 27.4 L53.4 27.6 L53.2 30.2 L9 30.2 Z"/></g>
<path d="M8.6 30.7 H53.4" stroke="#15283c" stroke-width="1.1"/>
<g fill="#263646"><path d="M5.2 22.2 L9 21.8 L10 20 L11.4 19 L12.6 20.2 L13.4 21.8 L19 21.6 L21 20 L23.4 18.8 L25.8 19.8 L27 21.4 L30 21.6 L30.2 18 L30.8 18 L31 21.6 L36.8 21.6 L37 17.6 L37.6 17.6 L37.8 21.4 L41 21.4 L42.6 20.2 L45.8 20.6 L46 23.4 L44.6 24.2 L6 24.2 Z"/>
<path d="M12 25 L20 25 M24 26 L36 26 M40.4 22 V30" stroke="#263646" stroke-width=".8" fill="none"/></g>
<path d="M10 23.2 H28 M18 25.6 L30 25.2" stroke="#9fb0ba" stroke-width=".7"/>
<g fill="#8a9ba6"><path d="M5.2 38.6 L8 38 L9.4 36.6 L11.6 35 L12 37.6 L17 38.2 L19 37.6 L23.6 37.6 L23.8 32.6 L24.4 32.6 L24.6 36.8 L26 36.6 L26.2 34.4 L27.4 34.4 L27.8 36.6 L29.4 36.8 L29.8 38 L36 38.2 L36.2 34.6 L36.8 34.6 L37 38.2 L44 38.2 L45.4 37 L50 36.6 L55.2 36.8 L55 40.6 L6.4 40.8 Z"/></g>
<path d="M6 41 H55" stroke="#5c7486" stroke-width=".8"/>
</svg></div><span class="t" style="left:645.30px;width:300px;text-align:center;top:118.64px;font:normal 12px/12px 'Liberation Sans','Arial',sans-serif;color:#10101c;">0 (-)</span><svg class="abs" style="left:559.6px;top:139.9px" width="8" height="8"><path d="M4 0.2 L7.8 4 L4 7.8 L0.2 4Z" fill="#1878b8"/></svg><div class="cn" style="left:568px;top:140px;background:#0a94d6;"><span class="t" style="left:2.60px;top:2.43px;font:normal 14.5px/14.5px 'Liberation Sans','Arial',sans-serif;color:#0a1c50;">1</span><span class="t" style="left:-242.60px;width:300px;text-align:right;top:2.43px;font:normal 14.5px/14.5px 'Liberation Sans','Arial',sans-serif;color:#0a1c50;">1</span><div class="abs" style="left:28.6px;top:5.6px;width:3.6px;height:5.6px;background:#0a62a4"></div><svg class="abs" style="left:5.6px;top:6.2px" width="46.6" height="33.4" viewBox="0 0 40 27" preserveAspectRatio="none"><g>
<path d="M1.6 25.4 Q0.2 23.6 2 21.8 L13 14.2 L25 8.2 L29.6 3.4 L31.6 0.8 L34 0.4 L35.4 3 L35.6 6 L38.8 4.8 L39.8 6.6 L34.6 10.4 L25 15.8 L15 21.8 L6 26.6Z" fill="#5d6870"/>
<path d="M2 21.8 L6.4 19 L8.6 23 L4 26.2Z" fill="#dfe6ea"/>
<path d="M7.4 18.4 L13 14.6 L16 17.6 L9.6 21.8Z" fill="#30383e"/>
<path d="M11 18.4 L22 12 L24 14.6 L13 20.8Z" fill="#eef2f4"/>
<path d="M14.6 14.6 L20 11.4 L21.4 13.2 L16 16.4Z" fill="#22282c"/>
<path d="M21 11.2 L27 8 L28.4 10.4 L22.6 13.6Z" fill="#4a7a46"/>
<circle cx="22.6" cy="11.6" r="1.7" fill="#e0d848"/><circle cx="22.6" cy="11.6" r="1" fill="#2a5a9a"/>
<path d="M26 8 L31 5 L32.6 7.6 L28 10.4Z" fill="#c8d0d4"/>
<path d="M29.6 3.4 L31.6 0.8 L34 0.4 L35.4 3 L35.6 6.4 L32 7Z" fill="#1c2024"/>
<path d="M32.2 1.6 L33.6 5.8" stroke="#e03838" stroke-width="1.2"/>
<path d="M16.6 24.6 L23 21 L24.6 22.2 L18.4 26.2Z" fill="#8a949a"/>
<path d="M10.4 12.6 l1.6 2.4" stroke="#1c2a3a" stroke-width=".7"/>
</g></svg><div class="abs" style="left:41.6px;top:27.9px;width:14px;height:14px;border-radius:50%;background:#fdfd1e"></div><span class="t" style="left:-101.40px;width:300px;text-align:center;top:27.63px;font:normal 14.5px/14.5px 'Liberation Sans','Arial',sans-serif;color:#1c1c04;">6</span><span class="t" style="left:2.60px;top:43.43px;font:normal 14.5px/14.5px 'Liberation Sans','Arial',sans-serif;color:#0a1c50;">1</span><span class="t" style="left:-242.60px;width:300px;text-align:right;top:44.24px;font:normal 12px/12px 'Liberation Sans','Arial',sans-serif;color:#0a1c50;">*</span><span class="t" style="left:19.50px;top:47.80px;font:bold 10.4px/10.4px 'Liberation Sans','Arial',sans-serif;color:#0a1c50;transform:scaleX(0.8372);transform-origin:0 0">Skua</span></div><span class="t" style="left:444.30px;width:300px;text-align:center;top:201.64px;font:normal 12px/12px 'Liberation Sans','Arial',sans-serif;color:#10101c;">0 (-)</span><div class="mk" style="left:628px;top:141px;background:#000"><i style="background:#e27412"></i></div><div class="mk" style="left:636px;top:133px;background:#000"><i style="background:#9a9a9a"></i></div><div class="cn" style="left:635px;top:140px;background:#0a94d6;"><span class="t" style="left:2.60px;top:2.43px;font:normal 14.5px/14.5px 'Liberation Sans','Arial',sans-serif;color:#0a1c50;">6</span><div class="abs" style="left:21.9px;top:0.8000000000000007px;width:15.0px;height:15.0px;border-radius:50%;background:#f57c48"></div><span class="t" style="left:-120.60px;width:300px;text-align:center;top:1.93px;font:normal 14.5px/14.5px 'Liberation Sans','Arial',sans-serif;color:#2a1206;">5</span><span class="t" style="left:-243.40px;width:300px;text-align:right;top:2.43px;font:normal 14.5px/14.5px 'Liberation Sans','Arial',sans-serif;color:#0a1c50;">4</span><span class="t" style="left:2.60px;top:43.43px;font:normal 14.5px/14.5px 'Liberation Sans','Arial',sans-serif;color:#0a1c50;">3</span><div class="abs" style="left:22.0px;top:43.8px;width:15.0px;height:15.0px;border-radius:50%;background:#fdfd1e"></div><span class="t" style="left:-120.50px;width:300px;text-align:center;top:43.83px;font:normal 14.5px/14.5px 'Liberation Sans','Arial',sans-serif;color:#1c1c04;">3</span><span class="t" style="left:-243.40px;width:300px;text-align:right;top:43.43px;font:normal 14.5px/14.5px 'Liberation Sans','Arial',sans-serif;color:#0a1c50;">2</span><svg class="abs" style="left:8.6px;top:16.4px" width="46" height="9.6" viewBox="0 0 45 10" preserveAspectRatio="none"><g fill="#1e2a38"><path d="M0.5 7.4 L3 7.6 L9 7.2 L11 6 L12.4 6.2 L13 4.4 L14 4.2 L14.4 1.4 L15.2 1.4 L15.6 4 L17 4.4 L17.6 2.8 L18.8 2.8 L19.2 4.6 L21 4.2 L21.6 2.2 L22.6 2.2 L23 4.4 L24.6 4.8 L25 0.8 L25.8 0.8 L26.2 5 L28 5.6 L29.4 6.6 L32 6.6 L34 7.2 L44.5 7.4 L44.5 8.6 L42 9.2 L4 9.2 L0.5 8.6Z"/></g></svg><span class="t" style="left:11.35px;top:28.64px;font:bold 7.4px/7.4px 'Liberation Sans','Arial',sans-serif;color:#0a1c50;transform:scaleX(0.8995);transform-origin:0 0">BB Renown</span></div><span class="t" style="left:511.30px;width:300px;text-align:center;top:201.64px;font:normal 12px/12px 'Liberation Sans','Arial',sans-serif;color:#10101c;">0 (-)</span><div class="mk" style="left:695px;top:141px;background:#000"><i style="background:#e27412"></i></div><div class="mk" style="left:703px;top:133px;background:#000"><i style="background:#e070b8"></i></div><div class="cn" style="left:702px;top:140px;background:#0a94d6;"><div class="abs" style="left:2.8px;top:1.8px;width:13.2px;height:14px;background:#fff"></div><span class="t" style="left:5.00px;top:2.43px;font:normal 14.5px/14.5px 'Liberation Sans','Arial',sans-serif;color:#101014;">1</span><div class="abs" style="left:21.8px;top:0.9000000000000004px;width:15.0px;height:15.0px;border-radius:50%;background:#f57c48"></div><span class="t" style="left:-120.70px;width:300px;text-align:center;top:1.93px;font:normal 14.5px/14.5px 'Liberation Sans','Arial',sans-serif;color:#2a1206;">3</span><span class="t" style="left:-243.80px;width:300px;text-align:right;top:2.43px;font:normal 14.5px/14.5px 'Liberation Sans','Arial',sans-serif;color:#0a1c50;">10</span><span class="t" style="left:2.60px;top:43.43px;font:normal 14.5px/14.5px 'Liberation Sans','Arial',sans-serif;color:#0a1c50;">0</span><div class="abs" style="left:22.0px;top:43.8px;width:15.0px;height:15.0px;border-radius:50%;background:#fdfd1e"></div><span class="t" style="left:-120.50px;width:300px;text-align:center;top:43.83px;font:normal 14.5px/14.5px 'Liberation Sans','Arial',sans-serif;color:#1c1c04;">3</span><span class="t" style="left:-243.40px;width:300px;text-align:right;top:43.43px;font:normal 14.5px/14.5px 'Liberation Sans','Arial',sans-serif;color:#0a1c50;">0</span><svg class="abs" style="left:0;top:0" width="59" height="59" viewBox="0 0 59 59">
<g fill="#8796a0"><path d="M8.4 26.2 L12 26 L13 25 L20 25.2 L24 26.4 L30 26.2 L36 26.4 L44 26 L45.4 24.6 L47 24.8 L47.4 27.4 L53.4 27.6 L53.2 30.2 L9 30.2 Z"/></g>
<path d="M8.6 30.7 H53.4" stroke="#15283c" stroke-width="1.1"/>
<g fill="#263646"><path d="M5.2 22.2 L9 21.8 L10 20 L11.4 19 L12.6 20.2 L13.4 21.8 L19 21.6 L21 20 L23.4 18.8 L25.8 19.8 L27 21.4 L30 21.6 L30.2 18 L30.8 18 L31 21.6 L36.8 21.6 L37 17.6 L37.6 17.6 L37.8 21.4 L41 21.4 L42.6 20.2 L45.8 20.6 L46 23.4 L44.6 24.2 L6 24.2 Z"/>
<path d="M12 25 L20 25 M24 26 L36 26 M40.4 22 V30" stroke="#263646" stroke-width=".8" fill="none"/></g>
<path d="M10 23.2 H28 M18 25.6 L30 25.2" stroke="#9fb0ba" stroke-width=".7"/>
<g fill="#8a9ba6"><path d="M5.2 38.6 L8 38 L9.4 36.6 L11.6 35 L12 37.6 L17 38.2 L19 37.6 L23.6 37.6 L23.8 32.6 L24.4 32.6 L24.6 36.8 L26 36.6 L26.2 34.4 L27.4 34.4 L27.8 36.6 L29.4 36.8 L29.8 38 L36 38.2 L36.2 34.6 L36.8 34.6 L37 38.2 L44 38.2 L45.4 37 L50 36.6 L55.2 36.8 L55 40.6 L6.4 40.8 Z"/></g>
<path d="M6 41 H55" stroke="#5c7486" stroke-width=".8"/>
</svg></div><span class="t" style="left:578.30px;width:300px;text-align:center;top:201.64px;font:normal 12px/12px 'Liberation Sans','Arial',sans-serif;color:#10101c;">0 (-)</span><div class="mk" style="left:762px;top:141px;background:#000"><i style="background:#e27412"></i></div><div class="mk" style="left:770px;top:133px;background:#000"><i style="background:#e070b8"></i></div><div class="cn" style="left:769px;top:140px;background:#0a94d6;"><div class="abs" style="left:2.8px;top:1.8px;width:13.2px;height:14px;background:#fff"></div><span class="t" style="left:5.00px;top:2.43px;font:normal 14.5px/14.5px 'Liberation Sans','Arial',sans-serif;color:#101014;">8</span><div class="abs" style="left:21.8px;top:0.9000000000000004px;width:15.0px;height:15.0px;border-radius:50%;background:#f57c48"></div><span class="t" style="left:-120.70px;width:300px;text-align:center;top:1.93px;font:normal 14.5px/14.5px 'Liberation Sans','Arial',sans-serif;color:#2a1206;">3</span><span class="t" style="left:-243.80px;width:300px;text-align:right;top:2.43px;font:normal 14.5px/14.5px 'Liberation Sans','Arial',sans-serif;color:#0a1c50;">10</span><span class="t" style="left:2.60px;top:43.43px;font:normal 14.5px/14.5px 'Liberation Sans','Arial',sans-serif;color:#0a1c50;">0</span><div class="abs" style="left:22.0px;top:43.8px;width:15.0px;height:15.0px;border-radius:50%;background:#fdfd1e"></div><span class="t" style="left:-120.50px;width:300px;text-align:center;top:43.83px;font:normal 14.5px/14.5px 'Liberation Sans','Arial',sans-serif;color:#1c1c04;">3</span><span class="t" style="left:-243.40px;width:300px;text-align:right;top:43.43px;font:normal 14.5px/14.5px 'Liberation Sans','Arial',sans-serif;color:#0a1c50;">0</span><svg class="abs" style="left:0;top:0" width="59" height="59" viewBox="0 0 59 59">
<g fill="#8796a0"><path d="M8.4 26.2 L12 26 L13 25 L20 25.2 L24 26.4 L30 26.2 L36 26.4 L44 26 L45.4 24.6 L47 24.8 L47.4 27.4 L53.4 27.6 L53.2 30.2 L9 30.2 Z"/></g>
<path d="M8.6 30.7 H53.4" stroke="#15283c" stroke-width="1.1"/>
<g fill="#263646"><path d="M5.2 22.2 L9 21.8 L10 20 L11.4 19 L12.6 20.2 L13.4 21.8 L19 21.6 L21 20 L23.4 18.8 L25.8 19.8 L27 21.4 L30 21.6 L30.2 18 L30.8 18 L31 21.6 L36.8 21.6 L37 17.6 L37.6 17.6 L37.8 21.4 L41 21.4 L42.6 20.2 L45.8 20.6 L46 23.4 L44.6 24.2 L6 24.2 Z"/>
<path d="M12 25 L20 25 M24 26 L36 26 M40.4 22 V30" stroke="#263646" stroke-width=".8" fill="none"/></g>
<path d="M10 23.2 H28 M18 25.6 L30 25.2" stroke="#9fb0ba" stroke-width=".7"/>
<g fill="#8a9ba6"><path d="M5.2 38.6 L8 38 L9.4 36.6 L11.6 35 L12 37.6 L17 38.2 L19 37.6 L23.6 37.6 L23.8 32.6 L24.4 32.6 L24.6 36.8 L26 36.6 L26.2 34.4 L27.4 34.4 L27.8 36.6 L29.4 36.8 L29.8 38 L36 38.2 L36.2 34.6 L36.8 34.6 L37 38.2 L44 38.2 L45.4 37 L50 36.6 L55.2 36.8 L55 40.6 L6.4 40.8 Z"/></g>
<path d="M6 41 H55" stroke="#5c7486" stroke-width=".8"/>
</svg></div><span class="t" style="left:645.30px;width:300px;text-align:center;top:201.64px;font:normal 12px/12px 'Liberation Sans','Arial',sans-serif;color:#10101c;">0 (-)</span><span class="t" style="left:-225.20px;width:300px;text-align:right;top:246.69px;font:normal 11px/11px 'DejaVu Sans','Verdana',sans-serif;color:#0c0c14;transform:scaleX(1.09);transform-origin:100% 0;">LAtt:</span><span class="t" style="left:79.40px;top:246.69px;font:normal 11px/11px 'DejaVu Sans','Verdana',sans-serif;color:#cc1818;transform:scaleX(1.09);transform-origin:0 0;">0</span><span class="t" style="left:-225.20px;width:300px;text-align:right;top:259.69px;font:normal 11px/11px 'DejaVu Sans','Verdana',sans-serif;color:#0c0c14;transform:scaleX(1.09);transform-origin:100% 0;">LDef:</span><span class="t" style="left:79.40px;top:259.69px;font:normal 11px/11px 'DejaVu Sans','Verdana',sans-serif;color:#0c6c0c;transform:scaleX(1.09);transform-origin:0 0;">0</span><span class="t" style="left:-225.20px;width:300px;text-align:right;top:272.69px;font:normal 11px/11px 'DejaVu Sans','Verdana',sans-serif;color:#0c0c14;transform:scaleX(1.09);transform-origin:100% 0;">LBmb:</span><span class="t" style="left:79.40px;top:272.69px;font:normal 11px/11px 'DejaVu Sans','Verdana',sans-serif;color:#d428d4;transform:scaleX(1.09);transform-origin:0 0;">0</span><span class="t" style="left:-225.20px;width:300px;text-align:right;top:285.69px;font:normal 11px/11px 'DejaVu Sans','Verdana',sans-serif;color:#0c0c14;transform:scaleX(1.09);transform-origin:100% 0;">LMov:</span><span class="t" style="left:79.40px;top:285.69px;font:normal 11px/11px 'DejaVu Sans','Verdana',sans-serif;color:#84841c;transform:scaleX(1.09);transform-origin:0 0;">0</span><span class="t" style="left:-225.20px;width:300px;text-align:right;top:298.69px;font:normal 11px/11px 'DejaVu Sans','Verdana',sans-serif;color:#0c0c14;transform:scaleX(1.09);transform-origin:100% 0;">LRrg:</span><span class="t" style="left:79.40px;top:298.69px;font:normal 11px/11px 'DejaVu Sans','Verdana',sans-serif;color:#7a0a86;transform:scaleX(1.09);transform-origin:0 0;">0</span><span class="t" style="left:-225.20px;width:300px;text-align:right;top:311.69px;font:normal 11px/11px 'DejaVu Sans','Verdana',sans-serif;color:#0c0c14;transform:scaleX(1.09);transform-origin:100% 0;">LAA:</span><span class="t" style="left:79.40px;top:311.69px;font:normal 11px/11px 'DejaVu Sans','Verdana',sans-serif;color:#1010c8;transform:scaleX(1.09);transform-origin:0 0;">0</span><span class="t" style="left:-142.20px;width:300px;text-align:right;top:246.69px;font:normal 11px/11px 'DejaVu Sans','Verdana',sans-serif;color:#0c0c14;transform:scaleX(1.09);transform-origin:100% 0;">AAtt:</span><span class="t" style="left:162.40px;top:246.69px;font:normal 11px/11px 'DejaVu Sans','Verdana',sans-serif;color:#cc1818;transform:scaleX(1.09);transform-origin:0 0;">4</span><span class="t" style="left:-142.20px;width:300px;text-align:right;top:259.69px;font:normal 11px/11px 'DejaVu Sans','Verdana',sans-serif;color:#0c0c14;transform:scaleX(1.09);transform-origin:100% 0;">ADef:</span><span class="t" style="left:162.40px;top:259.69px;font:normal 11px/11px 'DejaVu Sans','Verdana',sans-serif;color:#0c6c0c;transform:scaleX(1.09);transform-origin:0 0;">4</span><span class="t" style="left:-142.20px;width:300px;text-align:right;top:272.69px;font:normal 11px/11px 'DejaVu Sans','Verdana',sans-serif;color:#0c0c14;transform:scaleX(1.09);transform-origin:100% 0;">ANav:</span><span class="t" style="left:162.40px;top:272.69px;font:normal 11px/11px 'DejaVu Sans','Verdana',sans-serif;color:#1010c8;transform:scaleX(1.09);transform-origin:0 0;">0</span><span class="t" style="left:-142.20px;width:300px;text-align:right;top:285.69px;font:normal 11px/11px 'DejaVu Sans','Verdana',sans-serif;color:#0c0c14;transform:scaleX(1.09);transform-origin:100% 0;">ATac:</span><span class="t" style="left:162.40px;top:285.69px;font:normal 11px/11px 'DejaVu Sans','Verdana',sans-serif;color:#5a0c0c;transform:scaleX(1.09);transform-origin:0 0;">0</span><span class="t" style="left:-142.20px;width:300px;text-align:right;top:298.69px;font:normal 11px/11px 'DejaVu Sans','Verdana',sans-serif;color:#0c0c14;transform:scaleX(1.09);transform-origin:100% 0;">AStr:</span><span class="t" style="left:162.40px;top:298.69px;font:normal 11px/11px 'DejaVu Sans','Verdana',sans-serif;color:#d428d4;transform:scaleX(1.09);transform-origin:0 0;">0</span><span class="t" style="left:-142.20px;width:300px;text-align:right;top:311.69px;font:normal 11px/11px 'DejaVu Sans','Verdana',sans-serif;color:#0c0c14;transform:scaleX(1.09);transform-origin:100% 0;">ATrs:</span><span class="t" style="left:162.40px;top:311.69px;font:normal 11px/11px 'DejaVu Sans','Verdana',sans-serif;color:#7a0a86;transform:scaleX(1.09);transform-origin:0 0;">No</span><span class="t" style="left:-57.20px;width:300px;text-align:right;top:272.69px;font:normal 11px/11px 'DejaVu Sans','Verdana',sans-serif;color:#0c0c14;transform:scaleX(1.09);transform-origin:100% 0;">ARng:</span><span class="t" style="left:247.40px;top:272.69px;font:normal 11px/11px 'DejaVu Sans','Verdana',sans-serif;color:#1c8890;transform:scaleX(1.09);transform-origin:0 0;">3</span><span class="t" style="left:-57.20px;width:300px;text-align:right;top:298.69px;font:normal 11px/11px 'DejaVu Sans','Verdana',sans-serif;color:#0c0c14;transform:scaleX(1.09);transform-origin:100% 0;">NACp:</span><span class="t" style="left:247.40px;top:298.69px;font:normal 11px/11px 'DejaVu Sans','Verdana',sans-serif;color:#0c0c78;transform:scaleX(1.09);transform-origin:0 0;">0</span><span class="t" style="left:-57.20px;width:300px;text-align:right;top:311.69px;font:normal 11px/11px 'DejaVu Sans','Verdana',sans-serif;color:#0c0c14;transform:scaleX(1.09);transform-origin:100% 0;">NSrch:</span><span class="t" style="left:247.40px;top:311.69px;font:normal 11px/11px 'DejaVu Sans','Verdana',sans-serif;color:#8a8a8a;transform:scaleX(1.09);transform-origin:0 0;">4(-1R)</span><span class="t" style="left:33.40px;width:300px;text-align:right;top:259.69px;font:normal 11px/11px 'DejaVu Sans','Verdana',sans-serif;color:#0c0c14;transform:scaleX(1.09);transform-origin:100% 0;">NAtt:</span><span class="t" style="left:338.00px;top:259.69px;font:normal 11px/11px 'DejaVu Sans','Verdana',sans-serif;color:#cc1818;transform:scaleX(1.09);transform-origin:0 0;">13</span><span class="t" style="left:33.40px;width:300px;text-align:right;top:272.69px;font:normal 11px/11px 'DejaVu Sans','Verdana',sans-serif;color:#0c0c14;transform:scaleX(1.09);transform-origin:100% 0;">Ships:</span><span class="t" style="left:338.00px;top:272.69px;font:normal 11px/11px 'DejaVu Sans','Verdana',sans-serif;color:#0c6c0c;transform:scaleX(1.09);transform-origin:0 0;">2</span><span class="t" style="left:33.40px;width:300px;text-align:right;top:285.69px;font:normal 11px/11px 'DejaVu Sans','Verdana',sans-serif;color:#0c0c14;transform:scaleX(1.09);transform-origin:100% 0;">NAA:</span><span class="t" style="left:338.00px;top:285.69px;font:normal 11px/11px 'DejaVu Sans','Verdana',sans-serif;color:#1010c8;transform:scaleX(1.09);transform-origin:0 0;">4</span><span class="t" style="left:33.40px;width:300px;text-align:right;top:298.69px;font:normal 11px/11px 'DejaVu Sans','Verdana',sans-serif;color:#0c0c14;transform:scaleX(1.09);transform-origin:100% 0;">NASW:</span><span class="t" style="left:338.00px;top:298.69px;font:normal 11px/11px 'DejaVu Sans','Verdana',sans-serif;color:#e8802a;transform:scaleX(1.09);transform-origin:0 0;">4</span><span class="t" style="left:123.40px;width:300px;text-align:right;top:259.69px;font:normal 11px/11px 'DejaVu Sans','Verdana',sans-serif;color:#0c0c14;transform:scaleX(1.09);transform-origin:100% 0;">NBmb:</span><span class="t" style="left:428.00px;top:259.69px;font:normal 11px/11px 'DejaVu Sans','Verdana',sans-serif;color:#d428d4;transform:scaleX(1.09);transform-origin:0 0;">5</span><span class="t" style="left:123.40px;width:300px;text-align:right;top:272.69px;font:normal 11px/11px 'DejaVu Sans','Verdana',sans-serif;color:#0c0c14;transform:scaleX(1.09);transform-origin:100% 0;">NMov:</span><span class="t" style="left:428.00px;top:272.69px;font:normal 11px/11px 'DejaVu Sans','Verdana',sans-serif;color:#84841c;transform:scaleX(1.09);transform-origin:0 0;">5-6</span><span class="t" style="left:123.40px;width:300px;text-align:right;top:285.69px;font:normal 11px/11px 'DejaVu Sans','Verdana',sans-serif;color:#0c0c14;transform:scaleX(1.09);transform-origin:100% 0;">NRng:</span><span class="t" style="left:428.00px;top:285.69px;font:normal 11px/11px 'DejaVu Sans','Verdana',sans-serif;color:#1c8890;transform:scaleX(1.09);transform-origin:0 0;">3-4</span><span class="t" style="left:123.40px;width:300px;text-align:right;top:298.69px;font:normal 11px/11px 'DejaVu Sans','Verdana',sans-serif;color:#0c0c14;transform:scaleX(1.09);transform-origin:100% 0;">NTrs:</span><span class="t" style="left:428.00px;top:298.69px;font:normal 11px/11px 'DejaVu Sans','Verdana',sans-serif;color:#7a0a86;transform:scaleX(1.09);transform-origin:0 0;">No</span><span class="t" style="left:186.60px;top:246.69px;font:bold 11px/11px 'DejaVu Sans','Verdana',sans-serif;color:#000;transform:scaleX(1.0602);transform-origin:0 0;">Country: Germany</span><span class="t" style="left:334.80px;width:300px;text-align:right;top:246.69px;font:normal 11px/11px 'DejaVu Sans','Verdana',sans-serif;color:#0c0c14;transform:scaleX(1.09);transform-origin:100% 0;">LAtt:</span><span class="t" style="left:639.40px;top:246.69px;font:normal 11px/11px 'DejaVu Sans','Verdana',sans-serif;color:#cc1818;transform:scaleX(1.09);transform-origin:0 0;">0</span><span class="t" style="left:334.80px;width:300px;text-align:right;top:259.69px;font:normal 11px/11px 'DejaVu Sans','Verdana',sans-serif;color:#0c0c14;transform:scaleX(1.09);transform-origin:100% 0;">LDef:</span><span class="t" style="left:639.40px;top:259.69px;font:normal 11px/11px 'DejaVu Sans','Verdana',sans-serif;color:#0c6c0c;transform:scaleX(1.09);transform-origin:0 0;">0</span><span class="t" style="left:334.80px;width:300px;text-align:right;top:272.69px;font:normal 11px/11px 'DejaVu Sans','Verdana',sans-serif;color:#0c0c14;transform:scaleX(1.09);transform-origin:100% 0;">LBmb:</span><span class="t" style="left:639.40px;top:272.69px;font:normal 11px/11px 'DejaVu Sans','Verdana',sans-serif;color:#d428d4;transform:scaleX(1.09);transform-origin:0 0;">0</span><span class="t" style="left:334.80px;width:300px;text-align:right;top:285.69px;font:normal 11px/11px 'DejaVu Sans','Verdana',sans-serif;color:#0c0c14;transform:scaleX(1.09);transform-origin:100% 0;">LMov:</span><span class="t" style="left:639.40px;top:285.69px;font:normal 11px/11px 'DejaVu Sans','Verdana',sans-serif;color:#84841c;transform:scaleX(1.09);transform-origin:0 0;">0</span><span class="t" style="left:334.80px;width:300px;text-align:right;top:298.69px;font:normal 11px/11px 'DejaVu Sans','Verdana',sans-serif;color:#0c0c14;transform:scaleX(1.09);transform-origin:100% 0;">LRrg:</span><span class="t" style="left:639.40px;top:298.69px;font:normal 11px/11px 'DejaVu Sans','Verdana',sans-serif;color:#7a0a86;transform:scaleX(1.09);transform-origin:0 0;">0</span><span class="t" style="left:334.80px;width:300px;text-align:right;top:311.69px;font:normal 11px/11px 'DejaVu Sans','Verdana',sans-serif;color:#0c0c14;transform:scaleX(1.09);transform-origin:100% 0;">LAA:</span><span class="t" style="left:639.40px;top:311.69px;font:normal 11px/11px 'DejaVu Sans','Verdana',sans-serif;color:#1010c8;transform:scaleX(1.09);transform-origin:0 0;">0</span><span class="t" style="left:417.80px;width:300px;text-align:right;top:246.69px;font:normal 11px/11px 'DejaVu Sans','Verdana',sans-serif;color:#0c0c14;transform:scaleX(1.09);transform-origin:100% 0;">AAtt:</span><span class="t" style="left:722.40px;top:246.69px;font:normal 11px/11px 'DejaVu Sans','Verdana',sans-serif;color:#cc1818;transform:scaleX(1.09);transform-origin:0 0;">5</span><span class="t" style="left:417.80px;width:300px;text-align:right;top:259.69px;font:normal 11px/11px 'DejaVu Sans','Verdana',sans-serif;color:#0c0c14;transform:scaleX(1.09);transform-origin:100% 0;">ADef:</span><span class="t" style="left:722.40px;top:259.69px;font:normal 11px/11px 'DejaVu Sans','Verdana',sans-serif;color:#0c6c0c;transform:scaleX(1.09);transform-origin:0 0;">6</span><span class="t" style="left:417.80px;width:300px;text-align:right;top:272.69px;font:normal 11px/11px 'DejaVu Sans','Verdana',sans-serif;color:#0c0c14;transform:scaleX(1.09);transform-origin:100% 0;">ANav:</span><span class="t" style="left:722.40px;top:272.69px;font:normal 11px/11px 'DejaVu Sans','Verdana',sans-serif;color:#1010c8;transform:scaleX(1.09);transform-origin:0 0;">,5</span><span class="t" style="left:417.80px;width:300px;text-align:right;top:285.69px;font:normal 11px/11px 'DejaVu Sans','Verdana',sans-serif;color:#0c0c14;transform:scaleX(1.09);transform-origin:100% 0;">ATac:</span><span class="t" style="left:722.40px;top:285.69px;font:normal 11px/11px 'DejaVu Sans','Verdana',sans-serif;color:#5a0c0c;transform:scaleX(1.09);transform-origin:0 0;">1</span><span class="t" style="left:417.80px;width:300px;text-align:right;top:298.69px;font:normal 11px/11px 'DejaVu Sans','Verdana',sans-serif;color:#0c0c14;transform:scaleX(1.09);transform-origin:100% 0;">AStr:</span><span class="t" style="left:722.40px;top:298.69px;font:normal 11px/11px 'DejaVu Sans','Verdana',sans-serif;color:#d428d4;transform:scaleX(1.09);transform-origin:0 0;">0</span><span class="t" style="left:417.80px;width:300px;text-align:right;top:311.69px;font:normal 11px/11px 'DejaVu Sans','Verdana',sans-serif;color:#0c0c14;transform:scaleX(1.09);transform-origin:100% 0;">ATrs:</span><span class="t" style="left:722.40px;top:311.69px;font:normal 11px/11px 'DejaVu Sans','Verdana',sans-serif;color:#7a0a86;transform:scaleX(1.09);transform-origin:0 0;">No</span><span class="t" style="left:502.80px;width:300px;text-align:right;top:272.69px;font:normal 11px/11px 'DejaVu Sans','Verdana',sans-serif;color:#0c0c14;transform:scaleX(1.09);transform-origin:100% 0;">ARng:</span><span class="t" style="left:807.40px;top:272.69px;font:normal 11px/11px 'DejaVu Sans','Verdana',sans-serif;color:#1c8890;transform:scaleX(1.09);transform-origin:0 0;">3-6</span><span class="t" style="left:502.80px;width:300px;text-align:right;top:298.69px;font:normal 11px/11px 'DejaVu Sans','Verdana',sans-serif;color:#0c0c14;transform:scaleX(1.09);transform-origin:100% 0;">NACp:</span><span class="t" style="left:807.40px;top:298.69px;font:normal 11px/11px 'DejaVu Sans','Verdana',sans-serif;color:#0c0c78;transform:scaleX(1.09);transform-origin:0 0;">0</span><span class="t" style="left:502.80px;width:300px;text-align:right;top:311.69px;font:normal 11px/11px 'DejaVu Sans','Verdana',sans-serif;color:#0c0c14;transform:scaleX(1.09);transform-origin:100% 0;">NSrch:</span><span class="t" style="left:807.40px;top:311.69px;font:normal 11px/11px 'DejaVu Sans','Verdana',sans-serif;color:#8a8a8a;transform:scaleX(1.09);transform-origin:0 0;">1(+1R)</span><span class="t" style="left:593.40px;width:300px;text-align:right;top:259.69px;font:normal 11px/11px 'DejaVu Sans','Verdana',sans-serif;color:#0c0c14;transform:scaleX(1.09);transform-origin:100% 0;">NAtt:</span><span class="t" style="left:898.00px;top:259.69px;font:normal 11px/11px 'DejaVu Sans','Verdana',sans-serif;color:#cc1818;transform:scaleX(1.09);transform-origin:0 0;">15</span><span class="t" style="left:593.40px;width:300px;text-align:right;top:272.69px;font:normal 11px/11px 'DejaVu Sans','Verdana',sans-serif;color:#0c0c14;transform:scaleX(1.09);transform-origin:100% 0;">Ships:</span><span class="t" style="left:898.00px;top:272.69px;font:normal 11px/11px 'DejaVu Sans','Verdana',sans-serif;color:#0c6c0c;transform:scaleX(1.09);transform-origin:0 0;">10</span><span class="t" style="left:593.40px;width:300px;text-align:right;top:285.69px;font:normal 11px/11px 'DejaVu Sans','Verdana',sans-serif;color:#0c0c14;transform:scaleX(1.09);transform-origin:100% 0;">NAA:</span><span class="t" style="left:898.00px;top:285.69px;font:normal 11px/11px 'DejaVu Sans','Verdana',sans-serif;color:#1010c8;transform:scaleX(1.09);transform-origin:0 0;">6</span><span class="t" style="left:593.40px;width:300px;text-align:right;top:298.69px;font:normal 11px/11px 'DejaVu Sans','Verdana',sans-serif;color:#0c0c14;transform:scaleX(1.09);transform-origin:100% 0;">NASW:</span><span class="t" style="left:898.00px;top:298.69px;font:normal 11px/11px 'DejaVu Sans','Verdana',sans-serif;color:#e8802a;transform:scaleX(1.09);transform-origin:0 0;">6,5</span><span class="t" style="left:683.40px;width:300px;text-align:right;top:259.69px;font:normal 11px/11px 'DejaVu Sans','Verdana',sans-serif;color:#0c0c14;transform:scaleX(1.09);transform-origin:100% 0;">NBmb:</span><span class="t" style="left:988.00px;top:259.69px;font:normal 11px/11px 'DejaVu Sans','Verdana',sans-serif;color:#d428d4;transform:scaleX(1.09);transform-origin:0 0;">0</span><span class="t" style="left:683.40px;width:300px;text-align:right;top:272.69px;font:normal 11px/11px 'DejaVu Sans','Verdana',sans-serif;color:#0c0c14;transform:scaleX(1.09);transform-origin:100% 0;">NMov:</span><span class="t" style="left:988.00px;top:272.69px;font:normal 11px/11px 'DejaVu Sans','Verdana',sans-serif;color:#84841c;transform:scaleX(1.09);transform-origin:0 0;">1-3</span><span class="t" style="left:683.40px;width:300px;text-align:right;top:285.69px;font:normal 11px/11px 'DejaVu Sans','Verdana',sans-serif;color:#0c0c14;transform:scaleX(1.09);transform-origin:100% 0;">NRng:</span><span class="t" style="left:988.00px;top:285.69px;font:normal 11px/11px 'DejaVu Sans','Verdana',sans-serif;color:#1c8890;transform:scaleX(1.09);transform-origin:0 0;">3-6</span><span class="t" style="left:683.40px;width:300px;text-align:right;top:298.69px;font:normal 11px/11px 'DejaVu Sans','Verdana',sans-serif;color:#0c0c14;transform:scaleX(1.09);transform-origin:100% 0;">NTrs:</span><span class="t" style="left:988.00px;top:298.69px;font:normal 11px/11px 'DejaVu Sans','Verdana',sans-serif;color:#7a0a86;transform:scaleX(1.09);transform-origin:0 0;">No</span><span class="t" style="left:746.60px;top:246.69px;font:bold 11px/11px 'DejaVu Sans','Verdana',sans-serif;color:#000;transform:scaleX(1.0605);transform-origin:0 0;">Country: Commonwealth</span><div class="abs" style="left:473px;top:279px;width:115.5px;height:17px;background:#a9a7a7"></div><svg class="abs" style="left:475px;top:280.7px" width="14" height="14"><circle cx="6.7" cy="6.7" r="5.5" fill="#dcdad8"/><circle cx="6.5" cy="6.5" r="4.9" fill="#fff"/></svg><span class="t" style="left:493.20px;top:281.37px;font:normal 12.2px/12.2px 'DejaVu Sans','Verdana',sans-serif;color:#0c0c14;transform:scaleX(1.0342);transform-origin:0 0;word-spacing:1.4px;">Show Damage</span><div class="abs" style="left:473px;top:311px;width:115.5px;height:17.6px;background:#a9a7a7"></div><svg class="abs" style="left:475px;top:312.7px" width="14" height="14"><circle cx="6.7" cy="6.7" r="5.5" fill="#dcdad8"/><circle cx="6.5" cy="6.5" r="4.9" fill="#fff"/><circle cx="6.5" cy="6.6" r="2.1" fill="#000"/></svg><span class="t" style="left:493.20px;top:313.37px;font:normal 12.2px/12.2px 'DejaVu Sans','Verdana',sans-serif;color:#0c0c14;transform:scaleX(1.0994);transform-origin:0 0;word-spacing:1.4px;">Show Section</span><div class="res" style="left:32px;top:355px;width:350px;height:48px"></div><span class="t" style="left:32.40px;top:358.59px;font:bold 12.3px/12.3px 'DejaVu Sans','Verdana',sans-serif;color:#07071a;transform:scaleX(1.0258);transform-origin:0 0;">Original Result:</span><span class="t" style="left:32.40px;top:380.59px;font:bold 12.3px/12.3px 'DejaVu Sans','Verdana',sans-serif;color:#07071a;transform:scaleX(1.0400);transform-origin:0 0;">2 Damaged + 3 Aborted</span><div class="res" style="left:32px;top:411px;width:350px;height:48px"></div><span class="t" style="left:32.40px;top:414.59px;font:bold 12.3px/12.3px 'DejaVu Sans','Verdana',sans-serif;color:#07071a;transform:scaleX(1.0352);transform-origin:0 0;">Current Result:</span><span class="t" style="left:32.40px;top:436.59px;font:bold 12.3px/12.3px 'DejaVu Sans','Verdana',sans-serif;color:#07071a;transform:scaleX(1.0400);transform-origin:0 0;">2 Damaged + 3 Aborted</span><div class="res" style="left:32px;top:467px;width:350px;height:48px"></div><span class="t" style="left:32.40px;top:470.59px;font:bold 12.3px/12.3px 'DejaVu Sans','Verdana',sans-serif;color:#07071a;transform:scaleX(1.0678);transform-origin:0 0;">Expected Axis Losses:</span><span class="t" style="left:32.40px;top:492.59px;font:bold 12.3px/12.3px 'DejaVu Sans','Verdana',sans-serif;color:#ee1414;transform:scaleX(1.0400);transform-origin:0 0;">2 Damaged + 3 Aborted</span><div class="res" style="left:32px;top:523px;width:350px;height:48px"></div><span class="t" style="left:32.40px;top:526.59px;font:bold 12.3px/12.3px 'DejaVu Sans','Verdana',sans-serif;color:#07071a;transform:scaleX(1.0554);transform-origin:0 0;">Expected Allied Losses:</span><span class="t" style="left:32.40px;top:548.59px;font:bold 12.3px/12.3px 'DejaVu Sans','Verdana',sans-serif;color:#07071a;transform:scaleX(1.0514);transform-origin:0 0;">1 Destroyed</span><span class="t" style="left:31.20px;top:586.59px;font:bold 12.3px/12.3px 'DejaVu Sans','Verdana',sans-serif;color:#07071a;transform:scaleX(1.0463);transform-origin:0 0;">Points Spent:</span><div class="abs" style="left:32px;top:603px;width:350px;height:108px;background:#fff;box-sizing:border-box;border-top:1px solid #6e6e6e;border-left:1px solid #6e6e6e;border-right:1px solid #fff;border-bottom:1px solid #fff"></div><span class="t" style="left:393.40px;top:357.05px;font:bold 15.3px/15.3px 'DejaVu Sans','Verdana',sans-serif;color:#07071a;transform:scaleX(0.9507);transform-origin:0 0;">Points Remaining:</span><span class="t" style="left:560.40px;top:357.05px;font:bold 15.3px/15.3px 'DejaVu Sans','Verdana',sans-serif;color:#07071a;transform:scaleX(1.1449);transform-origin:0 0;">8</span><span class="t" style="left:393.40px;top:383.59px;font:bold 12.3px/12.3px 'DejaVu Sans','Verdana',sans-serif;color:#07071a;transform:scaleX(1.0668);transform-origin:0 0;">Ways to spend points (cost):</span><div class="bd" style="left:394px;top:409px;width:320px;height:30px"></div><span class="t" style="left:503.30px;top:418.79px;font:normal 11px/11px 'DejaVu Sans','Verdana',sans-serif;color:#1c1c22;transform:scaleX(1.0573);transform-origin:0 0">Avoid Combat (4)</span><div class="bd" style="left:394px;top:443px;width:320px;height:30px"></div><span class="t" style="left:463.70px;top:452.79px;font:normal 11px/11px 'DejaVu Sans','Verdana',sans-serif;color:#1c1c22;transform:scaleX(1.0630);transform-origin:0 0">Choose Naval Combat Type (4)</span><div class="bd" style="left:394px;top:477px;width:320px;height:30px"></div><span class="t" style="left:417.70px;top:486.79px;font:normal 11px/11px 'DejaVu Sans','Verdana',sans-serif;color:#1c1c22;transform:scaleX(1.0776);transform-origin:0 0">Increase Your Air-to-Air Combat Value By 1 (2)</span><div class="bd" style="left:394px;top:511px;width:320px;height:30px"></div><span class="t" style="left:404.70px;top:520.79px;font:normal 11px/11px 'DejaVu Sans','Verdana',sans-serif;color:#1c1c22;transform:scaleX(1.0620);transform-origin:0 0">Decrease Enemy's Air-to-Air Combat Value By 1 (2)</span><div class="bd" style="left:394px;top:545px;width:320px;height:30px"></div><span class="t" style="left:430.60px;top:554.79px;font:normal 11px/11px 'DejaVu Sans','Verdana',sans-serif;color:#1c1c22;transform:scaleX(1.0701);transform-origin:0 0">Increase Your Anti-Aircraft Fire Column (2)</span><div class="bd" style="left:394px;top:579px;width:320px;height:30px"></div><span class="t" style="left:417.50px;top:588.79px;font:normal 11px/11px 'DejaVu Sans','Verdana',sans-serif;color:#1c1c22;transform:scaleX(1.0548);transform-origin:0 0">Decrease Enemy's Anti-Aircraft Fire Column (2)</span><div class="ba" style="left:394px;top:613px;width:320px;height:30px"></div><span class="t" style="left:459.00px;top:622.30px;font:normal 12.4px/12.4px 'Liberation Sans','Arial',sans-serif;color:#000;transform:scaleX(0.8541);transform-origin:0 0">Increase Your Naval Combat Column (2)</span><div class="ba" style="left:394px;top:647px;width:320px;height:30px"></div><span class="t" style="left:448.30px;top:656.30px;font:normal 12.4px/12.4px 'Liberation Sans','Arial',sans-serif;color:#000;transform:scaleX(0.8446);transform-origin:0 0">Decrease Enemy's Naval Combat Column (2)</span><div class="bd" style="left:394px;top:681px;width:320px;height:30px"></div><span class="t" style="left:505.70px;top:690.79px;font:normal 11px/11px 'DejaVu Sans','Verdana',sans-serif;color:#1c1c22;transform:scaleX(1.0669);transform-origin:0 0">Select Target (3)</span><div class="bd" style="left:89px;top:719px;width:100px;height:30px"></div><span class="t" style="left:116.00px;top:728.79px;font:normal 11px/11px 'DejaVu Sans','Verdana',sans-serif;color:#1c1c22;transform:scaleX(1.0027);transform-origin:0 0">Undo All</span><div class="bd" style="left:239px;top:719px;width:100px;height:30px"></div><span class="t" style="left:261.50px;top:728.79px;font:normal 11px/11px 'DejaVu Sans','Verdana',sans-serif;color:#1c1c22;transform:scaleX(0.9972);transform-origin:0 0">Undo Last</span><span class="t" style="left:719.40px;top:351.79px;font:bold 12.3px/12.3px 'DejaVu Sans','Verdana',sans-serif;color:#07071a;transform:scaleX(1.0545);transform-origin:0 0;">Location: Bay of Biscay [57, 18]</span><div class="abs" style="left:1031px;top:371px;width:1px;height:285px;background:#000"></div><div class="abs" style="left:721px;top:655px;width:311px;height:1px;background:#000"></div><div class="abs" id="map" style="left:721px;top:371px;width:293px;height:267px;overflow:hidden;background:#2a7ab5"><svg class="abs" style="left:-60px;top:-60px" width="420" height="400"><defs>
<filter id="oc" x="0" y="0" width="100%" height="100%" color-interpolation-filters="sRGB"><feTurbulence type="fractalNoise" baseFrequency="0.2 0.075" numOctaves="2" seed="11"/>
<feColorMatrix type="matrix" values="0 0 0 0 0.30  0 0 0 0 0.41  0 0 0 0 0.55  2.4 0 0 0 -0.92"/></filter>
<filter id="oc2" x="0" y="0" width="100%" height="100%" color-interpolation-filters="sRGB"><feTurbulence type="fractalNoise" baseFrequency="0.2 0.075" numOctaves="2" seed="11"/>
<feColorMatrix type="matrix" values="0 0 0 0 0.36  0 0 0 0 0.60  0 0 0 0 0.80  -2.4 0 0 0 0.98"/></filter></defs>
<g transform="rotate(20 210 200)"><rect x="-60" y="-60" width="540" height="520" filter="url(#oc)"/><rect x="-60" y="-60" width="540" height="520" filter="url(#oc2)" opacity=".5"/></g></svg><div class="abs" style="left:0;top:0;width:293px;height:1px;background:#1a4c78"></div><div class="abs" style="left:0;top:0;width:1px;height:267px;background:#1a4c78"></div><svg class="abs" style="left:31px;top:35px" width="7" height="7"><path d="M1 1 L4.6 4.6" stroke="#6caedb" stroke-width="1.1" fill="none"/><path d="M5.8 5.8 L2.2 5.4 L5.4 2.2Z" fill="#6caedb"/></svg><svg class="abs" style="left:99px;top:35px" width="7" height="7"><path d="M1 1 L4.6 4.6" stroke="#6caedb" stroke-width="1.1" fill="none"/><path d="M5.8 5.8 L2.2 5.4 L5.4 2.2Z" fill="#6caedb"/></svg><svg class="abs" style="left:167px;top:35px" width="7" height="7"><path d="M1 1 L4.6 4.6" stroke="#6caedb" stroke-width="1.1" fill="none"/><path d="M5.8 5.8 L2.2 5.4 L5.4 2.2Z" fill="#6caedb"/></svg><svg class="abs" style="left:235px;top:35px" width="7" height="7"><path d="M1 1 L4.6 4.6" stroke="#6caedb" stroke-width="1.1" fill="none"/><path d="M5.8 5.8 L2.2 5.4 L5.4 2.2Z" fill="#6caedb"/></svg><svg class="abs" style="left:-3px;top:91.5px" width="7" height="7"><path d="M1 1 L4.6 4.6" stroke="#6caedb" stroke-width="1.1" fill="none"/><path d="M5.8 5.8 L2.2 5.4 L5.4 2.2Z" fill="#6caedb"/></svg><svg class="abs" style="left:65px;top:91.5px" width="7" height="7"><path d="M1 1 L4.6 4.6" stroke="#6caedb" stroke-width="1.1" fill="none"/><path d="M5.8 5.8 L2.2 5.4 L5.4 2.2Z" fill="#6caedb"/></svg><svg class="abs" style="left:133px;top:91.5px" width="7" height="7"><path d="M1 1 L4.6 4.6" stroke="#6caedb" stroke-width="1.1" fill="none"/><path d="M5.8 5.8 L2.2 5.4 L5.4 2.2Z" fill="#6caedb"/></svg><svg class="abs" style="left:201px;top:91.5px" width="7" height="7"><path d="M1 1 L4.6 4.6" stroke="#6caedb" stroke-width="1.1" fill="none"/><path d="M5.8 5.8 L2.2 5.4 L5.4 2.2Z" fill="#6caedb"/></svg><svg class="abs" style="left:269px;top:91.5px" width="7" height="7"><path d="M1 1 L4.6 4.6" stroke="#6caedb" stroke-width="1.1" fill="none"/><path d="M5.8 5.8 L2.2 5.4 L5.4 2.2Z" fill="#6caedb"/></svg><svg class="abs" style="left:31px;top:148px" width="7" height="7"><path d="M1 1 L4.6 4.6" stroke="#6caedb" stroke-width="1.1" fill="none"/><path d="M5.8 5.8 L2.2 5.4 L5.4 2.2Z" fill="#6caedb"/></svg><svg class="abs" style="left:167px;top:148px" width="7" height="7"><path d="M1 1 L4.6 4.6" stroke="#6caedb" stroke-width="1.1" fill="none"/><path d="M5.8 5.8 L2.2 5.4 L5.4 2.2Z" fill="#6caedb"/></svg><svg class="abs" style="left:235px;top:148px" width="7" height="7"><path d="M1 1 L4.6 4.6" stroke="#6caedb" stroke-width="1.1" fill="none"/><path d="M5.8 5.8 L2.2 5.4 L5.4 2.2Z" fill="#6caedb"/></svg><svg class="abs" style="left:-3px;top:204.5px" width="7" height="7"><path d="M1 1 L4.6 4.6" stroke="#6caedb" stroke-width="1.1" fill="none"/><path d="M5.8 5.8 L2.2 5.4 L5.4 2.2Z" fill="#6caedb"/></svg><svg class="abs" style="left:201px;top:204.5px" width="7" height="7"><path d="M1 1 L4.6 4.6" stroke="#6caedb" stroke-width="1.1" fill="none"/><path d="M5.8 5.8 L2.2 5.4 L5.4 2.2Z" fill="#6caedb"/></svg><svg class="abs" style="left:31px;top:261px" width="7" height="7"><path d="M1 1 L4.6 4.6" stroke="#6caedb" stroke-width="1.1" fill="none"/><path d="M5.8 5.8 L2.2 5.4 L5.4 2.2Z" fill="#6caedb"/></svg><svg class="abs" style="left:99px;top:261px" width="7" height="7"><path d="M1 1 L4.6 4.6" stroke="#6caedb" stroke-width="1.1" fill="none"/><path d="M5.8 5.8 L2.2 5.4 L5.4 2.2Z" fill="#6caedb"/></svg><div class="abs" style="left:146px;top:128px;width:46px;height:46px;box-sizing:border-box;border:1px solid #0a1a3c;background:#2078b5"></div><span class="t" style="left:19.00px;width:300px;text-align:center;top:130.49px;font:normal 11px/11px 'DejaVu Sans','Verdana',sans-serif;color:#f4f6fa;">Allied</span><span class="t" style="left:19.00px;width:300px;text-align:center;top:145.19px;font:bold 12.3px/12.3px 'DejaVu Sans','Verdana',sans-serif;color:#0a1030;">2</span><span class="t" style="left:19.00px;width:300px;text-align:center;top:160.49px;font:normal 11px/11px 'DejaVu Sans','Verdana',sans-serif;color:#dcec4c;">1*</span><div class="abs" style="left:282px;top:128px;width:46px;height:46px;box-sizing:border-box;border:1px solid #0a1a3c;background:#2078b5"></div><span class="t" style="left:155.00px;width:300px;text-align:center;top:130.49px;font:normal 11px/11px 'DejaVu Sans','Verdana',sans-serif;color:#f4f6fa;">Allied</span><span class="t" style="left:155.00px;width:300px;text-align:center;top:145.19px;font:bold 12.3px/12.3px 'DejaVu Sans','Verdana',sans-serif;color:#0a1030;">3</span><span class="t" style="left:155.00px;width:300px;text-align:center;top:160.49px;font:normal 11px/11px 'DejaVu Sans','Verdana',sans-serif;color:#dcec4c;">0*</span><div class="abs" style="left:180px;top:185px;width:46px;height:46px;box-sizing:border-box;border:1px solid #0a1a3c;background:#2078b5"></div><span class="t" style="left:53.00px;width:300px;text-align:center;top:187.49px;font:normal 11px/11px 'DejaVu Sans','Verdana',sans-serif;color:#f4f6fa;">Axis</span><span class="t" style="left:53.00px;width:300px;text-align:center;top:202.19px;font:bold 12.3px/12.3px 'DejaVu Sans','Verdana',sans-serif;color:#0a1030;">2</span><span class="t" style="left:53.00px;width:300px;text-align:center;top:217.49px;font:normal 11px/11px 'DejaVu Sans','Verdana',sans-serif;color:#dcec4c;">1*</span><div class="abs" style="left:248px;top:185px;width:46px;height:46px;box-sizing:border-box;border:1px solid #0a1a3c;background:#2078b5"></div><span class="t" style="left:121.00px;width:300px;text-align:center;top:187.49px;font:normal 11px/11px 'DejaVu Sans','Verdana',sans-serif;color:#f4f6fa;">Axis</span><span class="t" style="left:121.00px;width:300px;text-align:center;top:202.19px;font:bold 12.3px/12.3px 'DejaVu Sans','Verdana',sans-serif;color:#0a1030;">3</span><span class="t" style="left:121.00px;width:300px;text-align:center;top:217.49px;font:normal 11px/11px 'DejaVu Sans','Verdana',sans-serif;color:#dcec4c;">0*</span><span class="t" style="left:69.80px;top:247.74px;font:bold 27px/27px 'DejaVu Sans','Verdana',sans-serif;color:#000;transform:scaleX(1.0031);transform-origin:0 0;text-shadow:1px 1px 0 #e8f0f8,-1px -1px 0 #e8f0f8,1px -1px 0 #e8f0f8,-1px 1px 0 #e8f0f8;">Bay of Biscay</span><div class="abs" style="left:30px;top:116px;width:9px;height:11px;background:#000"></div><span class="t" style="left:-115.40px;width:300px;text-align:center;top:116.83px;font:normal 10.6px/10.6px 'Liberation Sans','Arial',sans-serif;color:#fff;">8</span><div class="abs" style="left:234px;top:116px;width:9px;height:11px;background:#000"></div><span class="t" style="left:88.60px;width:300px;text-align:center;top:116.83px;font:normal 10.6px/10.6px 'Liberation Sans','Arial',sans-serif;color:#fff;">8</span><div class="mk" style="left:3px;top:129px;background:#fff"><i style="background:#1878b8;border-radius:1px;left:1.3px;top:1.3px;width:4.4px;height:4.4px;transform:rotate(45deg)"></i></div><div class="cn" style="left:11.200000000000045px;top:129.2px;background:#0a94d6;transform:scale(0.79);transform-origin:0 0;box-shadow:0 0 0 1.2px #fff,1.5px 1.5px 0 1.3px #101010;"><span class="t" style="left:-242.60px;width:300px;text-align:right;top:2.44px;font:normal 12px/12px 'Liberation Sans','Arial',sans-serif;color:#0a1c50;">*</span><span class="t" style="left:2.60px;top:42.05px;font:normal 14px/14px 'Liberation Sans','Arial',sans-serif;color:#0a1c50;">1</span><div class="abs" style="left:21.0px;top:41.0px;width:17.0px;height:17.0px;border-radius:50%;background:#fdfd1e"></div><span class="t" style="left:-120.50px;width:300px;text-align:center;top:42.45px;font:normal 14px/14px 'Liberation Sans','Arial',sans-serif;color:#1c1c04;">3</span><span class="t" style="left:-242.60px;width:300px;text-align:right;top:44.24px;font:normal 12px/12px 'Liberation Sans','Arial',sans-serif;color:#0a1c50;">*</span><span class="t" style="left:1.20px;top:2.05px;font:normal 14px/14px 'Liberation Sans','Arial',sans-serif;color:#0a1c50;">5</span><span class="t" style="left:8.00px;top:0.83px;font:bold 10.6px/10.6px 'Liberation Sans','Arial',sans-serif;color:#0a1c50;transform:scaleX(0.8814);transform-origin:0 0">Hurricane</span><span class="t" style="left:25.20px;top:11.71px;font:bold 7.2px/7.2px 'Liberation Sans','Arial',sans-serif;color:#0a1c50;transform:scaleX(0.9578);transform-origin:0 0">IIA</span><svg class="abs" style="left:4.2px;top:18.6px" width="52" height="13.4" viewBox="0 0 52 12.4" preserveAspectRatio="none"><g>
<path d="M0.6 8.6 Q0.8 7 3.4 6.2 L14 4.8 L17 3.6 L22 3.4 L24 4.6 L36 5 L41 5.2 L43 1.6 Q45 -0.2 48 0.6 Q51 2 51.6 5 L50.6 7.4 L43 9 L34 10.4 L20 11.8 L8 11.4 L2.6 10.4Z" fill="#8a6a30"/>
<path d="M4 6.2 L9 5.6 L13 8 L9 11.2 L5 10.8 L7 8.2Z M17 5 L25 4.6 L30 8.4 L25 11 L20 9 Z M34 5.2 L40 5.2 L42 8.8 L36 10Z" fill="#4e6a2a"/>
<path d="M0.6 8.6 Q0.8 7.4 2.4 6.6 L3.2 9.6Z" fill="#e8d020"/>
<path d="M16.4 4.2 L21.8 3.6 L21.8 4.8 L16.6 5.2Z" fill="#f0f0f0"/>
<path d="M12 10 L22 9.6 L22 10.8 L12 11Z" fill="#e8e8f4"/>
<circle cx="31.6" cy="7.6" r="2.7" fill="#e8e040"/><circle cx="31.6" cy="7.6" r="2" fill="#2a6a8a"/><circle cx="31.6" cy="7.6" r="1.1" fill="#f0f0f0"/><circle cx="31.6" cy="7.6" r=".5" fill="#b02020"/>
<rect x="43.6" y="2" width="2" height="4" fill="#e03028"/><rect x="45.6" y="2" width="1.6" height="4" fill="#f4f4f4"/>
<path d="M27.4 0.4 V3.8" stroke="#223" stroke-width=".7"/>
<path d="M43 9 l-0.4 1.8" stroke="#112" stroke-width="1.2"/>
</g></svg></div><div class="mk" style="left:87.60000000000002px;top:121.39999999999998px;background:#000"><i style="background:#f0a814"></i></div><div class="mk" style="left:71px;top:146.79999999999995px;background:#000"><i style="background:#1878b8;border-radius:1px;left:1.3px;top:1.3px;width:4.4px;height:4.4px;transform:rotate(45deg)"></i></div><div class="cn" style="left:79.20000000000005px;top:129.2px;background:#0a94d6;transform:scale(0.79);transform-origin:0 0;box-shadow:0 0 0 1.2px #fff,1.5px 1.5px 0 1.3px #101010;"><span class="t" style="left:2.60px;top:2.85px;font:normal 14px/14px 'Liberation Sans','Arial',sans-serif;color:#0a1c50;">1</span><div class="abs" style="left:20.9px;top:-0.1999999999999993px;width:17.0px;height:17.0px;border-radius:50%;background:#f57c48"></div><span class="t" style="left:-120.60px;width:300px;text-align:center;top:2.35px;font:normal 14px/14px 'Liberation Sans','Arial',sans-serif;color:#2a1206;">3</span><span class="t" style="left:-243.40px;width:300px;text-align:right;top:2.85px;font:normal 14px/14px 'Liberation Sans','Arial',sans-serif;color:#0a1c50;">9</span><span class="t" style="left:2.60px;top:42.05px;font:normal 14px/14px 'Liberation Sans','Arial',sans-serif;color:#0a1c50;">1</span><div class="abs" style="left:21.0px;top:41.0px;width:17.0px;height:17.0px;border-radius:50%;background:#fdfd1e"></div><span class="t" style="left:-120.50px;width:300px;text-align:center;top:42.45px;font:normal 14px/14px 'Liberation Sans','Arial',sans-serif;color:#1c1c04;">2</span><span class="t" style="left:-243.40px;width:300px;text-align:right;top:42.05px;font:normal 14px/14px 'Liberation Sans','Arial',sans-serif;color:#0a1c50;">2</span><svg class="abs" style="left:14px;top:13.4px" width="34" height="10" viewBox="0 0 33 10" preserveAspectRatio="none"><g fill="#1e2a38"><path d="M0.5 7.6 L8 7.4 L10 6.2 L11 6.4 L11.6 3.2 L12.4 3.2 L12.8 5 L14 4.6 L14.6 1 L15.4 1 L16 4.4 L17.6 4.8 L18.4 3.4 L19.4 3.6 L19.8 5.8 L22 6.2 L24 7 L32.5 7.4 L32.5 8.4 L30 9 L3 9 L0.5 8.4Z"/></g></svg><span class="t" style="left:11.60px;top:26.74px;font:bold 7.4px/7.4px 'Liberation Sans','Arial',sans-serif;color:#0a1c50;transform:scaleX(1.0691);transform-origin:0 0">CA Terror</span></div><div class="cn" style="left:215.20000000000005px;top:129.2px;background:#0a94d6;transform:scale(0.79);transform-origin:0 0;box-shadow:0 0 0 1.2px #fff,1.5px 1.5px 0 1.3px #101010;"><span class="t" style="left:2.60px;top:2.85px;font:normal 14px/14px 'Liberation Sans','Arial',sans-serif;color:#0a1c50;">5</span><div class="abs" style="left:20.9px;top:-0.1999999999999993px;width:17.0px;height:17.0px;border-radius:50%;background:#f57c48"></div><span class="t" style="left:-120.60px;width:300px;text-align:center;top:2.35px;font:normal 14px/14px 'Liberation Sans','Arial',sans-serif;color:#2a1206;">4</span><span class="t" style="left:-243.40px;width:300px;text-align:right;top:2.85px;font:normal 14px/14px 'Liberation Sans','Arial',sans-serif;color:#0a1c50;">4</span><span class="t" style="left:2.60px;top:42.05px;font:normal 14px/14px 'Liberation Sans','Arial',sans-serif;color:#0a1c50;">1</span><div class="abs" style="left:21.0px;top:41.0px;width:17.0px;height:17.0px;border-radius:50%;background:#fdfd1e"></div><span class="t" style="left:-120.50px;width:300px;text-align:center;top:42.45px;font:normal 14px/14px 'Liberation Sans','Arial',sans-serif;color:#1c1c04;">4</span><span class="t" style="left:-243.40px;width:300px;text-align:right;top:42.05px;font:normal 14px/14px 'Liberation Sans','Arial',sans-serif;color:#0a1c50;">3</span><svg class="abs" style="left:12px;top:16px" width="33" height="7.6" viewBox="0 0 31 10" preserveAspectRatio="none"><g fill="#1e2a38"><path d="M0.5 7.8 L9 7.6 L10.4 6.6 L11.4 6.8 L12 4.6 L12.6 2.4 L13.4 2.4 L13.8 4.6 L15 5 L15.6 3.2 L16.6 3.2 L17 5.2 L18.6 5 L19 1.4 L19.8 1.4 L20.2 5.2 L22 6 L24 6.8 L26 7.4 L30.5 7.6 L30.5 8.6 L28 9 L3 9 L0.5 8.6Z"/></g></svg><span class="t" style="left:4.60px;top:27.14px;font:bold 7.4px/7.4px 'Liberation Sans','Arial',sans-serif;color:#0a1c50;transform:scaleX(0.9819);transform-origin:0 0">BB Resolution</span></div><div class="mk" style="left:53.60000000000002px;top:177.60000000000002px;background:#000"><i style="background:#f0a814"></i></div><div class="mk" style="left:37px;top:185.60000000000002px;background:#fff"><i style="background:#1878b8;border-radius:1px;left:1.3px;top:1.3px;width:4.4px;height:4.4px;transform:rotate(45deg)"></i></div><div class="cn" style="left:45.200000000000045px;top:186.20000000000005px;background:#b3b3b5;transform:scale(0.79);transform-origin:0 0;box-shadow:0 0 0 1.2px #fff,1.5px 1.5px 0 1.3px #101010;"><span class="t" style="left:-242.60px;width:300px;text-align:right;top:2.44px;font:normal 12px/12px 'Liberation Sans','Arial',sans-serif;color:#16161c;">*</span><span class="t" style="left:2.60px;top:42.05px;font:normal 14px/14px 'Liberation Sans','Arial',sans-serif;color:#16161c;">1</span><div class="abs" style="left:21.0px;top:41.0px;width:17.0px;height:17.0px;border-radius:50%;background:#fdfd1e"></div><span class="t" style="left:-120.50px;width:300px;text-align:center;top:42.45px;font:normal 14px/14px 'Liberation Sans','Arial',sans-serif;color:#1c1c04;">3</span><span class="t" style="left:-242.60px;width:300px;text-align:right;top:44.24px;font:normal 12px/12px 'Liberation Sans','Arial',sans-serif;color:#16161c;">*</span><span class="t" style="left:1.40px;top:2.75px;font:normal 14px/14px 'Liberation Sans','Arial',sans-serif;color:#16161c;">4</span><span class="t" style="left:16.90px;top:1.87px;font:bold 10.2px/10.2px 'Liberation Sans','Arial',sans-serif;color:#14141c;transform:scaleX(0.8961);transform-origin:0 0">Bf 109</span><span class="t" style="left:25.30px;top:11.67px;font:bold 7px/7px 'Liberation Sans','Arial',sans-serif;color:#14141c;transform:scaleX(0.8252);transform-origin:0 0">E-1</span><svg class="abs" style="left:27.5px;top:17px" width="24" height="8"><path d="M0.5 0.6 V6 M7 1.6 H21.5" stroke="#33333a" stroke-width=".8" fill="none"/></svg><svg class="abs" style="left:3.4px;top:19px" width="52" height="12.4" viewBox="0 0 52 12.4"><g>
<path d="M0.6 9.2 Q0.2 7.6 2.2 6.8 L7 5.6 L16 4.6 L19 3.4 L23 3.2 L25 4.4 L40 5.4 L44 5.8 L45 2.2 Q46.6 0.2 49 0.8 Q51.6 2 51.4 5.4 L50.6 8.2 L48 9 L40 9.4 L28 10.6 L18 11.6 L8 11.4 L2.4 10.6Z" fill="#2e6a22"/>
<path d="M0.6 9.2 Q0.2 7.6 2.2 6.8 L6.6 5.8 L7.6 11.2 L2.4 10.6Z" fill="#f2b818"/>
<path d="M11 9.4 L19 8.6 L22 10 L21 11.4 L12 11.6Z" fill="#f4f4f4"/>
<path d="M17 4.4 L22.6 3.4 L24.6 4.6 L18.6 5.4Z" fill="#e8ece8"/>
<path d="M19.4 5.2 L24.4 4.8 L24.8 11 L20.6 11.4Z" fill="#f2b818"/>
<rect x="28.6" y="5.4" width="5" height="5" fill="#f0e8d0"/><path d="M31.1 5.4 V10.4 M28.6 7.9 H33.6" stroke="#0a0a0a" stroke-width="1.5"/>
<rect x="35" y="6" width="5" height="3.8" rx="1" fill="#58b8e0"/>
<path d="M44.4 5.8 L45.2 2.4 Q46.6 0.4 49 0.9 Q51.6 2 51.4 5.4 L50.6 8.2 L46 8.8Z" fill="#e8b41c"/>
<path d="M46 1.6 L48.6 1.4 L49.4 4 L46 4.6Z" fill="#2e6a22"/>
<path d="M46.6 8.6 l-0.6 2.2" stroke="#222" stroke-width="1"/>
</g></svg><span class="t" style="left:3.50px;top:35.64px;font:bold 7.4px/7.4px 'Liberation Sans','Arial',sans-serif;color:#20202a;transform:scaleX(0.8585);transform-origin:0 0">Emil</span></div><div class="mk" style="left:121.60000000000002px;top:177.60000000000002px;background:#000"><i style="background:#f0a814"></i></div><div class="cn" style="left:113.20000000000005px;top:186.20000000000005px;background:#a9d0f2;transform:scale(0.79);transform-origin:0 0;box-shadow:0 0 0 1.2px #fff,1.5px 1.5px 0 1.3px #101010;overflow:hidden;"><div class="abs" style="left:0;top:0;width:59px;height:16.8px;background:#d2ea78"></div><span class="t" style="left:2.60px;top:2.85px;font:normal 14px/14px 'Liberation Sans','Arial',sans-serif;color:#14202c;">4</span><div class="abs" style="left:20.9px;top:-0.1999999999999993px;width:17.0px;height:17.0px;border-radius:50%;background:#f57c48"></div><span class="t" style="left:-120.60px;width:300px;text-align:center;top:2.35px;font:normal 14px/14px 'Liberation Sans','Arial',sans-serif;color:#2a1206;">4</span><span class="t" style="left:-243.40px;width:300px;text-align:right;top:2.85px;font:normal 14px/14px 'Liberation Sans','Arial',sans-serif;color:#14202c;">7</span><span class="t" style="left:2.60px;top:42.05px;font:normal 14px/14px 'Liberation Sans','Arial',sans-serif;color:#14202c;">0</span><div class="abs" style="left:21.0px;top:41.0px;width:17.0px;height:17.0px;border-radius:50%;background:#fdfd1e"></div><span class="t" style="left:-120.50px;width:300px;text-align:center;top:42.45px;font:normal 14px/14px 'Liberation Sans','Arial',sans-serif;color:#1c1c04;">3</span><span class="t" style="left:-243.40px;width:300px;text-align:right;top:42.05px;font:normal 14px/14px 'Liberation Sans','Arial',sans-serif;color:#14202c;">0</span><svg class="abs" style="left:7px;top:19.6px" width="46" height="8" viewBox="0 0 46 10" preserveAspectRatio="none"><g fill="#2a3440"><path d="M0.5 7.6 L6 7.2 L14 7 L19 6.8 L19.6 4.8 L20.2 1.4 L20.8 1.4 L21.2 4.4 L22.6 4.6 L23.2 6.6 L26 6.8 L36 7 L42 7.2 L45.5 7.6 L45.5 8.4 L40 8.8 L6 8.8 L0.5 8.4Z"/></g></svg><span class="t" style="left:8.60px;top:28.78px;font:bold 9px/9px 'Liberation Sans','Arial',sans-serif;color:#1c2838;transform:scaleX(0.9029);transform-origin:0 0">Submarine</span></div></div><div class="abs" style="left:1014px;top:371px;width:17px;height:267px;background:linear-gradient(90deg,#050402 0px,#050402 1px,#d8d0bc 1px,#d8d0bc 2px,#d0c8b4 2px,#d0c8b4 3px,#c4bca6 3px,#c4bca6 4px,#050402 4px,#050402 5px,#a89c80 5px,#a89c80 6px,#a09478 6px,#a09478 7px,#94886c 7px,#94886c 8px,#85795e 8px,#85795e 9px,#766a50 9px,#766a50 10px,#60563e 10px,#60563e 11px,#050402 11px,#050402 12px,#e8e0d0 12px,#e8e0d0 13px,#e0d8c6 13px,#e0d8c6 14px,#d4ccb8 14px,#d4ccb8 15px,#b0a890 15px,#b0a890 16px,#3a3428 16px,#3a3428 17px)"></div><div class="abs" style="left:721px;top:638px;width:293px;height:17px;background:linear-gradient(180deg,#050402 0px,#050402 1px,#d8d0bc 1px,#d8d0bc 2px,#d0c8b4 2px,#d0c8b4 3px,#c4bca6 3px,#c4bca6 4px,#050402 4px,#050402 5px,#a89c80 5px,#a89c80 6px,#a09478 6px,#a09478 7px,#94886c 7px,#94886c 8px,#85795e 8px,#85795e 9px,#766a50 9px,#766a50 10px,#60563e 10px,#60563e 11px,#050402 11px,#050402 12px,#e8e0d0 12px,#e8e0d0 13px,#e0d8c6 13px,#e0d8c6 14px,#d4ccb8 14px,#d4ccb8 15px,#b0a890 15px,#b0a890 16px,#3a3428 16px,#3a3428 17px)"></div><div class="abs" style="left:1014px;top:371px;width:17px;height:16px;background:linear-gradient(135deg,#b4a888,#8e8264 40%,#4c4432);box-sizing:border-box;border:1px solid #050402;"></div><svg class="abs" style="left:1014px;top:371px" width="17" height="16"><path d="M8.2 3 L11.8 10.6 H4.6Z" fill="#ece4cc"/></svg><div class="abs" style="left:1014px;top:622px;width:17px;height:16px;background:linear-gradient(135deg,#b4a888,#8e8264 40%,#4c4432);box-sizing:border-box;border:1px solid #050402;"></div><svg class="abs" style="left:1014px;top:622px" width="17" height="16"><path d="M8.2 12.6 L11.8 5 H4.6Z" fill="#ece4cc"/></svg><div class="abs" style="left:721px;top:638px;width:16px;height:17px;background:linear-gradient(135deg,#b4a888,#8e8264 40%,#4c4432);box-sizing:border-box;border:1px solid #050402;"></div><svg class="abs" style="left:721px;top:638px" width="16" height="17"><path d="M3.4 8.4 L10.8 4.8 V12Z" fill="#ece4cc"/></svg><div class="abs" style="left:998px;top:638px;width:16px;height:17px;background:linear-gradient(135deg,#b4a888,#8e8264 40%,#4c4432);box-sizing:border-box;border:1px solid #050402;"></div><svg class="abs" style="left:998px;top:638px" width="16" height="17"><path d="M12.6 8.4 L5.2 4.8 V12Z" fill="#ece4cc"/></svg><div class="abs" style="left:1014px;top:370px;width:18px;height:1px;background:#050402"></div><div class="abs" style="left:1016px;top:449px;width:13px;height:14.5px;box-sizing:border-box;border:1px solid #17130c;border-radius:1.5px;background:linear-gradient(135deg,#fdfcf8,#e9e4d8 50%,#b9b19e)"></div><div class="abs" style="left:859px;top:640px;width:14.5px;height:13px;box-sizing:border-box;border:1px solid #17130c;border-radius:1.5px;background:linear-gradient(135deg,#fdfcf8,#e9e4d8 50%,#b9b19e)"></div><div class="abs" style="left:1014px;top:638px;width:17px;height:17px;background:#d2cbbf"></div><div class="abs" style="left:747px;top:662px;width:285px;height:17px;background:#a9a7a7;box-sizing:border-box;border:1px dotted #1c1c1c"></div><div class="abs" style="left:729.5px;top:664px;width:13px;height:13px;background:#fff;box-sizing:border-box;border-top:1px solid #8e8e8e;border-left:1px solid #8e8e8e;border-right:1px solid #fff;border-bottom:1px solid #fff"></div><span class="t" style="left:747.80px;top:664.67px;font:normal 12.2px/12.2px 'DejaVu Sans','Verdana',sans-serif;color:#10101c;transform:scaleX(1.0474);transform-origin:0 0;word-spacing:1.2px;">Center linked map on selected combat hex</span><div class="ba" style="left:720px;top:685px;width:100px;height:30px"></div><span class="t" style="left:743.20px;top:694.30px;font:normal 12.4px/12.4px 'Liberation Sans','Arial',sans-serif;color:#000;transform:scaleX(0.8613);transform-origin:0 0">Naval CRT</span><div class="ba" style="left:932px;top:685px;width:100px;height:30px"></div><span class="t" style="left:946.80px;top:694.30px;font:normal 12.4px/12.4px 'Liberation Sans','Arial',sans-serif;color:#000;transform:scaleX(0.8545);transform-origin:0 0">WIF FE Charts</span><div class="ba" style="left:826px;top:719px;width:100px;height:30px"></div><span class="t" style="left:836.60px;top:728.30px;font:normal 12.4px/12.4px 'Liberation Sans','Arial',sans-serif;color:#000;transform:scaleX(0.8432);transform-origin:0 0">Anti-aircraft CRT</span><div class="ba" style="left:932px;top:719px;width:100px;height:30px"></div><span class="t" style="left:981.20px;top:728.30px;font:normal 12.4px/12.4px 'Liberation Sans','Arial',sans-serif;color:#000;transform:scaleX(0.8633);transform-origin:0 0">Help</span><div class="ba" style="left:489px;top:719px;width:100px;height:30px"></div><span class="t" style="left:541.40px;top:728.30px;font:normal 12.4px/12.4px 'Liberation Sans','Arial',sans-serif;color:#000;transform:scaleX(0.8154);transform-origin:0 0">OK</span><svg class="abs" style="left:521px;top:726px" width="18" height="16"><path d="M2.4 9.6 L4.6 7.8 L7.2 11 L14.2 2.4 L16.2 3.8 L7.6 15.2Z" fill="#103c8c"/><path d="M1.4 8.4 L3.8 6.6 L6.6 9.8 L13.4 1.2 L15.4 2.6 L6.8 13.8Z" fill="#18b82c"/></svg><svg class="abs" style="left:960px;top:725px" width="18" height="18"><path d="M1 8.4 L9 1.2 L16.4 4.6 L16.4 8 L8.6 15.6 L1 11.4Z" fill="#1a0a2a"/><path d="M1.6 8.2 L9 1.8 L15.8 5 L8.4 11.6Z" fill="#8a1c9c"/><path d="M1.8 9 L8.4 12.4 L15.8 5.8 L15.8 8 L8.6 14.8 L1.8 11Z" fill="#f0eef4"/><path d="M1.8 9 L8.4 12.4 L8.6 14.8 L1.8 11Z" fill="#c8c4d4"/><path d="M7.2 5.4 Q8.6 3.6 10.4 4.8 Q11 6 9.2 6.6 L9 7.4" stroke="#f8d820" stroke-width="1.3" fill="none"/><circle cx="8.8" cy="8.8" r=".8" fill="#f8d820"/></svg><div class="abs" style="left:981.6px;top:739.4px;width:7.2px;height:1px;background:#000"></div></div></body></html>
